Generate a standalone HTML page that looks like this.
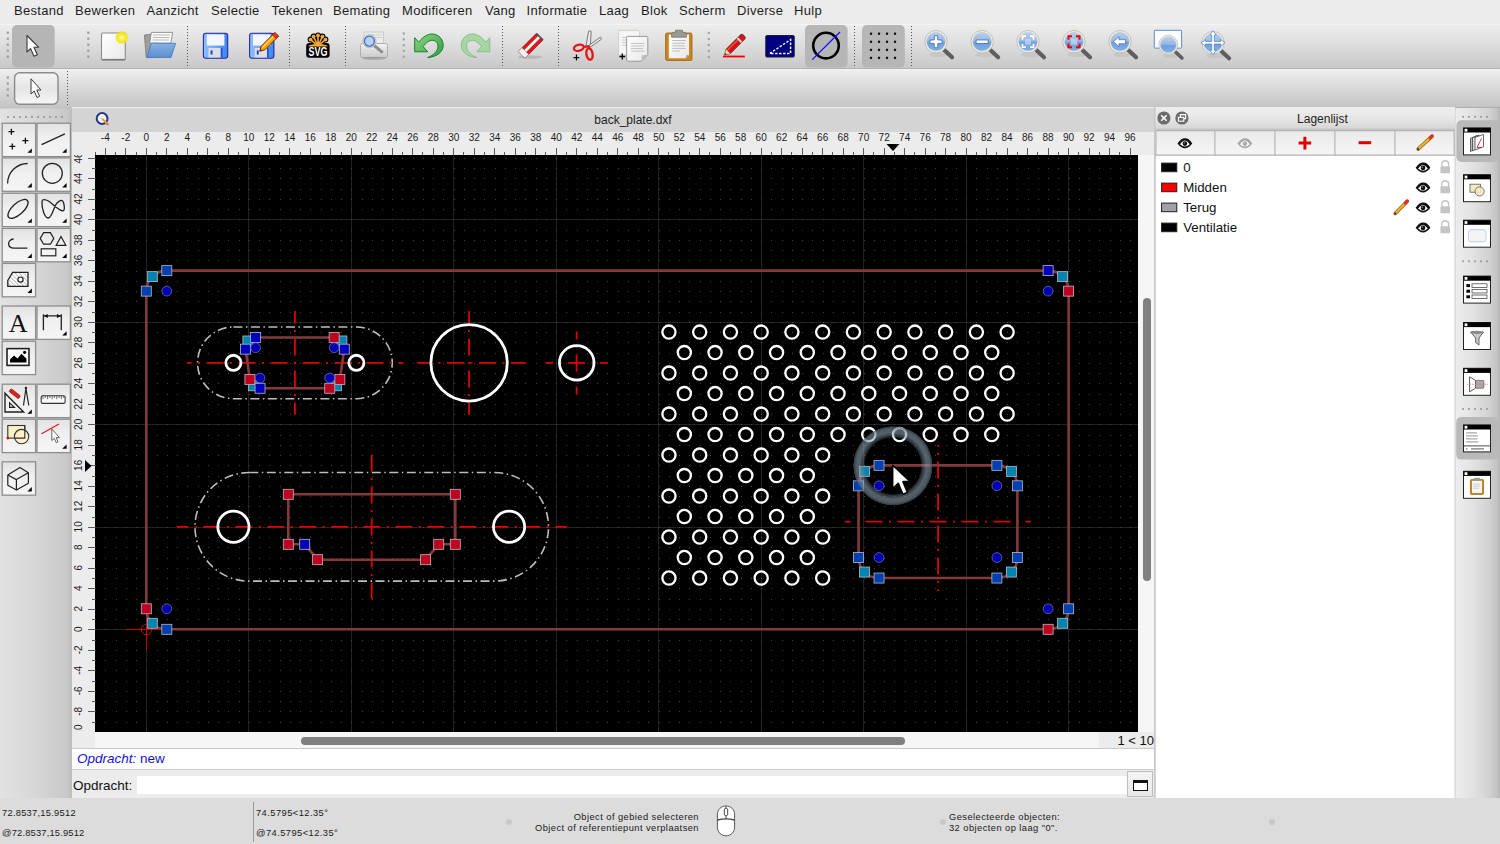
<!DOCTYPE html>
<html><head><meta charset="utf-8">
<style>
*{box-sizing:border-box}
html,body{margin:0;padding:0}
body{width:1500px;height:844px;overflow:hidden;position:relative;background:#ececec;font-family:"Liberation Sans",sans-serif;color:#1a1a1a}
.a{position:absolute}
#menubar{left:0;top:0;width:1500px;height:24px;background:#ececec}
#menubar span{position:absolute;top:3px;font-size:13px;line-height:15px;color:#1e1e1e;letter-spacing:0.3px}
#tb1{left:0;top:24px;width:1500px;height:45px;background:linear-gradient(#f7f7f7 0,#ececec 1.5px,#e2e2e2 35%,#d2d2d2 75%,#c8c8c8);border-bottom:1.5px solid #b0b0b0}
#tb2{left:0;top:69px;width:1500px;height:39px;background:linear-gradient(#f7f7f7 0,#ededed 1.5px,#e0e0e0 35%,#cfcfcf 75%,#c5c5c5);border-bottom:1.5px solid #adadad}
.sep{position:absolute;width:1px;border-left:1px dotted #6a6a6a}
.hdl{position:absolute;width:3px;background:radial-gradient(circle,#9a9a9a 0.9px,transparent 1.2px) 0 0/3px 6px repeat-y}
.selbg{position:absolute;background:#b7b7b7;border-radius:6px}
#leftdock{left:0;top:107px;width:72px;height:691px;background:linear-gradient(90deg,#e2e2e2,#d9d9d9 40%,#c9c9c9 92%,#bdbdbd)}
.pb{position:absolute;width:34px;height:34px;border:1.5px solid #8c8c8c;background:linear-gradient(#e4e4e4,#f2f2f2 55%,#f6f6f6)}
#mdi{left:72px;top:107px;width:1083px;height:691px;background:#ececec}
#titlebar{left:72px;top:108px;width:1082px;height:24px;background:#d4d4d4}
#hruler{left:72px;top:132px;width:1082px;height:23px;background:#ececec}
#vruler{left:72px;top:155px;width:23px;height:592px;background:#ececec}
.cv{position:absolute;left:95px;top:155px}
#vscroll{left:1138px;top:155px;width:16px;height:577px;background:#f6f6f6}
#hscroll{left:95px;top:732px;width:1059px;height:16px;background:#f6f6f6}
#cmdout{left:72px;top:748px;width:1082px;height:22px;background:#fff;border-top:1.5px solid #c8c8c8;border-bottom:1.5px solid #cfcfcf}
#cmdin{left:72px;top:770px;width:1082px;height:28px;background:#ececec}
#status{left:0;top:798px;width:1500px;height:46px;background:#dcdcdc}
#status .t{position:absolute;font-size:9.3px;line-height:12px;letter-spacing:0.45px;color:#1a1a1a;white-space:nowrap}
#layerdock{left:1154px;top:107px;width:301px;height:691px;background:#ececec;border-left:1.5px solid #cdcdcd}
#rightdock{left:1455px;top:108px;width:45px;height:690px;background:linear-gradient(90deg,#d2d2d2 0,#ececec 1.5px,#e4e4e4 35%,#d2d2d2 75%,#c2c2c2 94%,#b4b4b4)}
.lb{position:absolute;top:23px;width:60px;height:25px;background:linear-gradient(#eaeaea,#f4f4f4);border:1.5px solid #b5b5b5}
.lrow{position:absolute;left:6px;height:20px;width:290px;font-size:13.3px;line-height:20px;color:#111}
.sw{position:absolute;left:1px;top:6px;width:16px;height:9px;border:1px solid #222}
.dk{position:absolute;width:28px;height:28px;background:#fff;border:1px solid #333}
.dk:before{content:"";position:absolute;left:0;top:0;right:0;height:5px;background:#000}
.dk:after{content:"";position:absolute;left:1px;top:1px;width:3px;height:3px;background:#fff}
</style></head>
<body>
<div id="menubar" class="a">
<span style="left:14px">Bestand</span><span style="left:75px">Bewerken</span><span style="left:146.5px">Aanzicht</span><span style="left:211px">Selectie</span><span style="left:271.5px">Tekenen</span><span style="left:333px">Bemating</span><span style="left:402px">Modificeren</span><span style="left:485px">Vang</span><span style="left:526.5px">Informatie</span><span style="left:599px">Laag</span><span style="left:641px">Blok</span><span style="left:679px">Scherm</span><span style="left:737px">Diverse</span><span style="left:794px">Hulp</span>
</div>
<div id="tb1" class="a"></div>
<div id="tb2" class="a"></div>
<svg class="a" style="left:0;top:24px" width="1500" height="83" viewBox="0 24 1500 83"><defs>
<linearGradient id="gBlue" x1="0" y1="0" x2="0" y2="1"><stop offset="0" stop-color="#b9d0ee"/><stop offset="0.48" stop-color="#93b6e6"/><stop offset="0.52" stop-color="#6f9fdc"/><stop offset="1" stop-color="#7fb1ec"/></linearGradient>
<linearGradient id="gFold" x1="0" y1="0" x2="0" y2="1"><stop offset="0" stop-color="#88b2e2"/><stop offset="1" stop-color="#5a8fd0"/></linearGradient>
<linearGradient id="gDisk" x1="0" y1="0" x2="1" y2="0"><stop offset="0" stop-color="#8ec0ff"/><stop offset="1" stop-color="#3b86f0"/></linearGradient>
<linearGradient id="gUndo" x1="0" y1="0" x2="1" y2="1"><stop offset="0" stop-color="#8fd47e"/><stop offset="1" stop-color="#2f9e46"/></linearGradient>
<linearGradient id="gPaper" x1="0" y1="0" x2="1" y2="1"><stop offset="0" stop-color="#ffffff"/><stop offset="1" stop-color="#e8e8e8"/></linearGradient>
<linearGradient id="gPrint" x1="0" y1="0" x2="0" y2="1"><stop offset="0" stop-color="#f4f4f4"/><stop offset="1" stop-color="#c9c9c9"/></linearGradient>
<radialGradient id="gGlow"><stop offset="0" stop-color="#ffffff"/><stop offset="0.25" stop-color="#fff45a"/><stop offset="0.7" stop-color="#f2e31a"/><stop offset="1" stop-color="#f2e31a" stop-opacity="0"/></radialGradient>
<g id="lens"><ellipse cx="3" cy="13" rx="10" ry="2.5" fill="#000" opacity="0.06"/><path d="M8.5 8.5L16 15.5" stroke="#5e5e5e" stroke-width="4.2" stroke-linecap="round"/><circle r="11.2" fill="#f2f2ea" stroke="#b9b9b0" stroke-width="0.9"/><circle r="9.4" fill="url(#gBlue)" stroke="#c8c8c0" stroke-width="0.6"/></g>
</defs><rect x="6.699999999999999" y="31.6" width="2.2" height="2.2" fill="#9c9c9c"/><rect x="6.699999999999999" y="37.6" width="2.2" height="2.2" fill="#9c9c9c"/><rect x="6.699999999999999" y="43.6" width="2.2" height="2.2" fill="#9c9c9c"/><rect x="6.699999999999999" y="49.6" width="2.2" height="2.2" fill="#9c9c9c"/><rect x="6.699999999999999" y="55.6" width="2.2" height="2.2" fill="#9c9c9c"/><rect x="87.2" y="31.6" width="2.2" height="2.2" fill="#9c9c9c"/><rect x="87.2" y="37.6" width="2.2" height="2.2" fill="#9c9c9c"/><rect x="87.2" y="43.6" width="2.2" height="2.2" fill="#9c9c9c"/><rect x="87.2" y="49.6" width="2.2" height="2.2" fill="#9c9c9c"/><rect x="87.2" y="55.6" width="2.2" height="2.2" fill="#9c9c9c"/><rect x="402.7" y="32.4" width="2.2" height="2.2" fill="#a4a4a4"/><rect x="402.7" y="38.199999999999996" width="2.2" height="2.2" fill="#a4a4a4"/><rect x="402.7" y="44.0" width="2.2" height="2.2" fill="#a4a4a4"/><rect x="402.7" y="49.8" width="2.2" height="2.2" fill="#a4a4a4"/><rect x="402.7" y="55.6" width="2.2" height="2.2" fill="#a4a4a4"/><rect x="707.6999999999999" y="31.9" width="2.2" height="2.2" fill="#a4a4a4"/><rect x="707.6999999999999" y="37.9" width="2.2" height="2.2" fill="#a4a4a4"/><rect x="707.6999999999999" y="43.9" width="2.2" height="2.2" fill="#a4a4a4"/><rect x="707.6999999999999" y="49.9" width="2.2" height="2.2" fill="#a4a4a4"/><rect x="707.6999999999999" y="55.9" width="2.2" height="2.2" fill="#a4a4a4"/><line x1="187.5" y1="26" x2="187.5" y2="66" stroke="#555" stroke-width="1" stroke-dasharray="1 2"/><line x1="289.5" y1="26" x2="289.5" y2="66" stroke="#555" stroke-width="1" stroke-dasharray="1 2"/><line x1="345.5" y1="26" x2="345.5" y2="66" stroke="#555" stroke-width="1" stroke-dasharray="1 2"/><line x1="502.5" y1="26" x2="502.5" y2="66" stroke="#555" stroke-width="1" stroke-dasharray="1 2"/><line x1="558.5" y1="26" x2="558.5" y2="66" stroke="#555" stroke-width="1" stroke-dasharray="1 2"/><line x1="854.5" y1="26" x2="854.5" y2="66" stroke="#555" stroke-width="1" stroke-dasharray="1 2"/><line x1="911.5" y1="26" x2="911.5" y2="66" stroke="#555" stroke-width="1" stroke-dasharray="1 2"/><rect x="12" y="25" width="42.7" height="42.5" rx="5" fill="#b5b5b5"/><path d="M27 35.5V52L30.6 48.6L34 56.2L37.3 54.8L34 47.3H38.7Z" fill="#fff" stroke="#3a3a3a" stroke-width="1.1" stroke-linejoin="round"/><rect x="101.5" y="33" width="23.8" height="27" rx="1.2" fill="url(#gPaper)" stroke="#8a8a8a" stroke-width="1.1"/><path d="M102 59.6H125" stroke="#7a7a7a" stroke-width="1.4"/><circle cx="121.8" cy="37.5" r="7" fill="url(#gGlow)"/><path d="M144.4 35L151.5 34.3L151 57.2H146.2Z" fill="#9d9d9d" stroke="#7a7a7a" stroke-width="0.8"/><path d="M151.3 32.4H172.6L170.8 43.2H149.8Z" fill="#fbfbfb" stroke="#8a8a8a" stroke-width="0.9"/><path d="M153 35H170M153 37.5H169.5M152.5 40H169" stroke="#b8b8b8" stroke-width="1.2"/><path d="M151.4 43.1L175.6 43.4L171 57.4L146.6 57.6Z" fill="url(#gFold)" stroke="#4a7cc0" stroke-width="0.9" stroke-linejoin="round"/><rect x="203.4" y="33.2" width="24.3" height="25" rx="2.4" fill="url(#gDisk)" stroke="#2828a0" stroke-width="1.1"/><rect x="206.8" y="34.4" width="17.6" height="11.2" fill="#f4f6ff"/><rect x="208.4" y="47.9" width="12.4" height="9.6" fill="#dedee8"/><rect x="210.6" y="50.4" width="1.9" height="4.2" fill="#1a3ad0"/><rect x="220.8" y="47.9" width="1.6" height="9.6" fill="#1a4ce0"/><rect x="249.6" y="33.2" width="24.3" height="25" rx="2.4" fill="url(#gDisk)" stroke="#2828a0" stroke-width="1.1"/><rect x="253.0" y="34.4" width="17.6" height="11.2" fill="#f4f6ff"/><rect x="254.6" y="47.9" width="12.4" height="9.6" fill="#dedee8"/><rect x="256.8" y="50.4" width="1.9" height="4.2" fill="#1a3ad0"/><rect x="267.0" y="47.9" width="1.6" height="9.6" fill="#1a4ce0"/><g transform="translate(259.8 51.2) rotate(-45)"><path d="M0 0L4.5 -2.6H23.5V2.6H4.5Z" fill="#f7a800" stroke="#8a1a00" stroke-width="0.9" stroke-linejoin="round"/><path d="M4.5 -0.8H23.5" stroke="#ffd870" stroke-width="1.2"/><rect x="20.5" y="-2.6" width="3.5" height="5.2" fill="#e23a2a" stroke="#8a1a00" stroke-width="0.8"/><path d="M0 0L2 -1.1V1.1Z" fill="#333"/></g><rect x="306.2" y="43" width="23.4" height="14.8" rx="3" fill="#000"/><path d="M318 46L310.6 39.6M318 46L313.6 36.6M318 46L318 35.4M318 46L322.4 36.6M318 46L325.4 39.6" stroke="#000" stroke-width="3.6" stroke-linecap="round"/><circle cx="310.6" cy="39.6" r="3" fill="#000"/><circle cx="313.6" cy="36.6" r="3" fill="#000"/><circle cx="318" cy="35.4" r="3" fill="#000"/><circle cx="322.4" cy="36.6" r="3" fill="#000"/><circle cx="325.4" cy="39.6" r="3" fill="#000"/><path d="M318 46L310.6 39.6M318 46L313.6 36.6M318 46L318 35.4M318 46L322.4 36.6M318 46L325.4 39.6" stroke="#f5a83a" stroke-width="1.6" stroke-linecap="round"/><circle cx="310.6" cy="39.6" r="1.9" fill="#f5a83a"/><circle cx="313.6" cy="36.6" r="1.9" fill="#f5a83a"/><circle cx="318" cy="35.4" r="1.9" fill="#f5a83a"/><circle cx="322.4" cy="36.6" r="1.9" fill="#f5a83a"/><circle cx="325.4" cy="39.6" r="1.9" fill="#f5a83a"/><path d="M308.6 45.4Q318 42.5 327.4 45.4V46.4H308.6Z" fill="#f5a83a"/><text x="0" y="56.2" text-anchor="middle" font-family="Liberation Sans" font-weight="bold" font-size="12.4" fill="#fff" transform="translate(318 0) scale(0.72 1)">SVG</text><rect x="364" y="32" width="19.5" height="14" fill="#ececec" stroke="#c4c4c4" stroke-width="0.8"/><path d="M371 35H382M371 37.5H382" stroke="#cfcfcf" stroke-width="1"/><rect x="360.5" y="43.5" width="27" height="14.2" rx="2" fill="url(#gPrint)" stroke="#a8a8a8" stroke-width="0.9"/><path d="M362 50.5H386" stroke="#d8d8d8" stroke-width="1"/><ellipse cx="374" cy="58.5" rx="12" ry="1.6" fill="#000" opacity="0.15"/><path d="M373.5 45L381.8 51.8" stroke="#8d8d8d" stroke-width="3" stroke-linecap="round"/><circle cx="369.4" cy="41.2" r="6.6" fill="#dfe3e8" stroke="#b0b0b0" stroke-width="0.8"/><circle cx="369.4" cy="41.2" r="5" fill="#bcd0ec" stroke="#3a6ec4" stroke-width="1.3"/><path d="M414.7 37.7L418.6 42.1C423.5 36.5 427.5 34 432 34C438.5 34 443.2 39 443.2 45.5C443.2 52 436.5 57 427.6 57.6C434 55 438 51 438 46C438 42.5 435.5 40.3 432.3 40.3C429.3 40.3 426.3 42.5 423 46.5L427.6 51.8H414.7Z" fill="url(#gUndo)" stroke="#18802e" stroke-width="1"/><g transform="translate(904.5 0) scale(-1 1)"><path d="M414.7 37.7L418.6 42.1C423.5 36.5 427.5 34 432 34C438.5 34 443.2 39 443.2 45.5C443.2 52 436.5 57 427.6 57.6C434 55 438 51 438 46C438 42.5 435.5 40.3 432.3 40.3C429.3 40.3 426.3 42.5 423 46.5L427.6 51.8H414.7Z" fill="#a6d6a0" stroke="#7fbf8c" stroke-width="1" opacity="0.95"/></g><ellipse cx="530" cy="57" rx="12" ry="1.8" fill="#000" opacity="0.12"/><g transform="translate(530.8 45.6) rotate(-45)"><rect x="-13" y="-4.7" width="26" height="9.4" rx="1" fill="#d81a1a" stroke="#a80000" stroke-width="0.6"/><rect x="-13" y="-1.5" width="26" height="2.8" fill="#fafafa"/><rect x="-13" y="-4.7" width="5.2" height="9.4" fill="#f4f4f4" stroke="#999" stroke-width="0.5"/><rect x="11.6" y="-4.7" width="1.6" height="9.4" fill="#555"/></g><path d="M586 46.2L588.6 31.2Q590 30.4 591.2 31.4L590.2 46.2Z" fill="#ececec" stroke="#5a5a5a" stroke-width="0.8"/><path d="M589.2 45.2L600.4 37.2Q601.6 37.8 601.2 39.4L590.4 47Z" fill="#ececec" stroke="#5a5a5a" stroke-width="0.8"/><ellipse cx="578.8" cy="47.8" rx="5" ry="3" transform="rotate(-14 578.8 47.8)" fill="none" stroke="#e01818" stroke-width="2.3"/><ellipse cx="589.5" cy="54" rx="3.1" ry="5.8" transform="rotate(-10 589.5 54)" fill="none" stroke="#e01818" stroke-width="2.3"/><path d="M583.6 47L588.3 46.3L589.2 48.4" stroke="#e01818" stroke-width="2.2" fill="none"/><path d="M573.5 57.6H579.4M576.45 54.6V60.6" stroke="#000" stroke-width="1.2"/><path d="M618.6 31.2Q618.6 30.4 619.4 30.4H638.5L639.6 31.5V55H619.4Q618.6 55 618.6 54.2Z" fill="#f6f6f6" stroke="#c8c8c8" stroke-width="0.8"/><path d="M622 37.5H630M622 40H630M622 42.6H630M622 45.2H630" stroke="#cccccc" stroke-width="1"/><path d="M626.6 37.2Q626.6 36.4 627.4 36.4H647L647.8 37.2V54.5L641.5 61.2H627.4Q626.6 61.2 626.6 60.4Z" fill="url(#gPaper)" stroke="#8e8e8e" stroke-width="0.9"/><path d="M641.5 61.2L641.8 55.5L647.8 54.5Z" fill="#bdbdbd"/><path d="M631 43.4H644.5M631 46H644M631 48.6H643M631 51.2H644.5" stroke="#c2c2c2" stroke-width="1"/><path d="M619.4 56.5H625.2M622.3 53.6V59.5" stroke="#000" stroke-width="1.3"/><rect x="665.6" y="33" width="26.4" height="27.5" rx="1.6" fill="#c98520" stroke="#9a6010" stroke-width="0.8"/><path d="M668.8 34.4H689V55L686 58.2H668.8Z" fill="url(#gPaper)"/><path d="M686 58.2L686.3 55.3L689 55Z" fill="#9a9a9a"/><path d="M672.2 40.5H685.8M672.2 43.2H685M672.2 45.8H684.5M672.2 48.4H685.8M672.2 51H680" stroke="#bdbdbd" stroke-width="1"/><path d="M675.5 30.2H682.6V32.4H685.6L686.4 34V37.2H671.6V34L672.4 32.4H675.5Z" fill="#9a9a90" stroke="#6a6a64" stroke-width="0.7"/><path d="M723 56.5H744.8" stroke="#f00000" stroke-width="1.8"/><g transform="translate(724.6 55) rotate(-45)"><path d="M0 0L5 -3H25.5Q27.5 -3 27.5 0Q27.5 3 25.5 3H5Z" fill="#d81020" stroke="#6a3a10" stroke-width="0.9" stroke-linejoin="round"/><path d="M5 -1.4H22" stroke="#e85a2a" stroke-width="1.3"/><rect x="20" y="-3" width="2" height="6" fill="#d8d8d8"/><path d="M0 0L5 -3V3Z" fill="#f0d0a8"/><path d="M0 0L1.8 -1.1V1.1Z" fill="#222"/></g><rect x="765.8" y="35.6" width="28.4" height="21.4" rx="1" fill="#000080" stroke="#1a1a2a" stroke-width="1"/><path d="M769.8 53.5L790.6 39.6V53.5Z" fill="none" stroke="#fff" stroke-width="1.4" stroke-dasharray="2.4 1.6"/><rect x="805" y="25" width="42.6" height="42.6" rx="5" fill="#b6b6b6"/><circle cx="826" cy="45.6" r="12.8" fill="none" stroke="#000" stroke-width="2.6"/><path d="M812.2 59.6L840 32" stroke="#1010ff" stroke-width="1.3"/><rect x="862" y="25" width="42.8" height="42.6" rx="5" fill="#b6b6b6"/><rect x="869.9" y="32.6" width="2.2" height="2.2" fill="#111"/><rect x="877.9" y="32.6" width="2.2" height="2.2" fill="#111"/><rect x="885.9" y="32.6" width="2.2" height="2.2" fill="#111"/><rect x="893.9" y="32.6" width="2.2" height="2.2" fill="#111"/><rect x="869.9" y="40.699999999999996" width="2.2" height="2.2" fill="#111"/><rect x="877.9" y="40.699999999999996" width="2.2" height="2.2" fill="#111"/><rect x="885.9" y="40.699999999999996" width="2.2" height="2.2" fill="#111"/><rect x="893.9" y="40.699999999999996" width="2.2" height="2.2" fill="#111"/><rect x="869.9" y="48.8" width="2.2" height="2.2" fill="#111"/><rect x="877.9" y="48.8" width="2.2" height="2.2" fill="#111"/><rect x="885.9" y="48.8" width="2.2" height="2.2" fill="#111"/><rect x="893.9" y="48.8" width="2.2" height="2.2" fill="#111"/><rect x="869.9" y="56.8" width="2.2" height="2.2" fill="#111"/><rect x="877.9" y="56.8" width="2.2" height="2.2" fill="#111"/><rect x="885.9" y="56.8" width="2.2" height="2.2" fill="#111"/><rect x="893.9" y="56.8" width="2.2" height="2.2" fill="#111"/><g transform="translate(936 41.7)"><use href="#lens"/><path d="M-1.7 -6H1.7V-1.7H6V1.7H1.7V6H-1.7V1.7H-6V-1.7H-1.7Z" fill="#fff" stroke="#2a5ca8" stroke-width="0.7"/></g><g transform="translate(982.1 41.7)"><use href="#lens"/><rect x="-6" y="-1.7" width="12" height="3.4" fill="#fff" stroke="#2a5ca8" stroke-width="0.7"/></g><g transform="translate(1028 41.7)"><use href="#lens"/><rect x="-3" y="-3" width="6" height="6" fill="#c0d4f0" opacity="0.8"/><path d="M-5.5 -2V-5.5H-2M2 -5.5H5.5V-2M5.5 2V5.5H2M-2 5.5H-5.5V2" fill="none" stroke="#fff" stroke-width="1.8"/></g><g transform="translate(1074 41.7)"><use href="#lens"/><rect x="-3" y="-3" width="6" height="6" fill="#c0d4f0" opacity="0.8"/><path d="M-5.5 -2V-5.5H-2M2 -5.5H5.5V-2M5.5 2V5.5H2M-2 5.5H-5.5V2" fill="none" stroke="#f00000" stroke-width="2"/></g><g transform="translate(1120 41.7)"><use href="#lens"/><path d="M-6.5 0L-1 -5V-2H5.5V2H-1V5Z" fill="#fff" stroke="#2a5ca8" stroke-width="0.6"/></g><rect x="1154.3" y="30.3" width="27.3" height="17.8" rx="0.8" fill="#fff" stroke="#5a8ad0" stroke-width="1"/><g transform="translate(1168.3 44.8) scale(0.85)"><use href="#lens"/></g><g transform="translate(1213 42.7)"><use href="#lens"/><path d="M0 -12L-3.2 -7.5H-1.3V-1.3H-7.5V-3.2L-12 0L-7.5 3.2V1.3H-1.3V7.5H-3.2L0 12L3.2 7.5H1.3V1.3H7.5V3.2L12 0L7.5 -3.2V-1.3H1.3V-7.5H3.2Z" fill="#fff" stroke="#4a7cc8" stroke-width="0.7"/></g><rect x="6.699999999999999" y="76.4" width="2.2" height="2.2" fill="#9c9c9c"/><rect x="6.699999999999999" y="82.4" width="2.2" height="2.2" fill="#9c9c9c"/><rect x="6.699999999999999" y="88.4" width="2.2" height="2.2" fill="#9c9c9c"/><rect x="6.699999999999999" y="94.4" width="2.2" height="2.2" fill="#9c9c9c"/><line x1="67.5" y1="71" x2="67.5" y2="105" stroke="#555" stroke-width="1" stroke-dasharray="1 2"/><rect x="14.6" y="72.8" width="43.4" height="31.5" rx="5" fill="url(#gTb2btn)" stroke="#8a8a8a" stroke-width="1.4"/><defs><linearGradient id="gTb2btn" x1="0" y1="0" x2="0" y2="1"><stop offset="0" stop-color="#f4f4f4"/><stop offset="0.5" stop-color="#e6e6e6"/><stop offset="1" stop-color="#f6f6f6"/></linearGradient></defs><path d="M31 78.8V94L34.2 91L37 97.5L39.6 96.3L36.8 90H41Z" fill="#fff" stroke="#3a3a3a" stroke-width="1" stroke-linejoin="round"/></svg>

<div id="leftdock" class="a"></div>
<svg class="a" style="left:0;top:107px" width="72" height="400" viewBox="0 107 72 400"><defs><linearGradient id="gPB" x1="0" y1="0" x2="0" y2="1"><stop offset="0" stop-color="#e2e2e2"/><stop offset="0.45" stop-color="#f0f0f0"/><stop offset="1" stop-color="#f5f5f5"/></linearGradient></defs><rect x="0" y="107" width="72" height="1.5" fill="#c2c2c2"/><rect x="7" y="116" width="2" height="2" fill="#a2a2a2"/><rect x="13" y="116" width="2" height="2" fill="#a2a2a2"/><rect x="19" y="116" width="2" height="2" fill="#a2a2a2"/><rect x="25" y="116" width="2" height="2" fill="#a2a2a2"/><rect x="31" y="116" width="2" height="2" fill="#a2a2a2"/><rect x="37" y="116" width="2" height="2" fill="#a2a2a2"/><rect x="43" y="116" width="2" height="2" fill="#a2a2a2"/><rect x="49" y="116" width="2" height="2" fill="#a2a2a2"/><rect x="55" y="116" width="2" height="2" fill="#a2a2a2"/><rect x="61" y="116" width="2" height="2" fill="#a2a2a2"/><rect x="2.2" y="123.19999999999999" width="33.4" height="33.4" fill="url(#gPB)" stroke="#8e8e8e" stroke-width="1.3"/><rect x="37.0" y="123.19999999999999" width="33.4" height="33.4" fill="url(#gPB)" stroke="#8e8e8e" stroke-width="1.3"/><rect x="2.2" y="157.9" width="33.4" height="33.4" fill="url(#gPB)" stroke="#8e8e8e" stroke-width="1.3"/><rect x="37.0" y="157.9" width="33.4" height="33.4" fill="url(#gPB)" stroke="#8e8e8e" stroke-width="1.3"/><rect x="2.2" y="193.2" width="33.4" height="33.4" fill="url(#gPB)" stroke="#8e8e8e" stroke-width="1.3"/><rect x="37.0" y="193.2" width="33.4" height="33.4" fill="url(#gPB)" stroke="#8e8e8e" stroke-width="1.3"/><rect x="2.2" y="228.4" width="33.4" height="33.4" fill="url(#gPB)" stroke="#8e8e8e" stroke-width="1.3"/><rect x="37.0" y="228.4" width="33.4" height="33.4" fill="url(#gPB)" stroke="#8e8e8e" stroke-width="1.3"/><rect x="2.2" y="263.40000000000003" width="33.4" height="33.4" fill="url(#gPB)" stroke="#8e8e8e" stroke-width="1.3"/><rect x="2.2" y="306.0" width="33.4" height="33.4" fill="url(#gPB)" stroke="#8e8e8e" stroke-width="1.3"/><rect x="37.0" y="306.0" width="33.4" height="33.4" fill="url(#gPB)" stroke="#8e8e8e" stroke-width="1.3"/><rect x="2.2" y="341.20000000000005" width="33.4" height="33.4" fill="url(#gPB)" stroke="#8e8e8e" stroke-width="1.3"/><rect x="2.2" y="384.20000000000005" width="33.4" height="33.4" fill="url(#gPB)" stroke="#8e8e8e" stroke-width="1.3"/><rect x="37.0" y="384.20000000000005" width="33.4" height="33.4" fill="url(#gPB)" stroke="#8e8e8e" stroke-width="1.3"/><rect x="2.2" y="419.20000000000005" width="33.4" height="33.4" fill="url(#gPB)" stroke="#8e8e8e" stroke-width="1.3"/><rect x="37.0" y="419.20000000000005" width="33.4" height="33.4" fill="url(#gPB)" stroke="#8e8e8e" stroke-width="1.3"/><rect x="2.2" y="461.8" width="33.4" height="33.4" fill="url(#gPB)" stroke="#8e8e8e" stroke-width="1.3"/><path d="M8.4 131.7H14.4M11.4 128.7V134.7M22.4 140.7H28.4M25.4 137.7V143.7M9.3 146.4H15.3M12.3 143.4V149.4" stroke="#111" stroke-width="1.3"/><path d="M31.8 148.4V152.79999999999998H27.400000000000002Z" fill="#000"/><path d="M41.6 144.7L64.9 133.8" stroke="#222" fill="none" stroke-width="1.3"/><path d="M66.6 148.4V152.79999999999998H62.2Z" fill="#000"/><path d="M7.6 183.4A20 20 0 0 1 27.6 163.5" stroke="#222" fill="none" stroke-width="1.3"/><path d="M31.8 183.10000000000002V187.5H27.400000000000002Z" fill="#000"/><circle cx="52.3" cy="173.3" r="10" stroke="#222" fill="none" stroke-width="1.3"/><path d="M66.6 183.10000000000002V187.5H62.2Z" fill="#000"/><ellipse cx="18" cy="208.9" rx="12.6" ry="5.6" transform="rotate(-42 18 208.9)" stroke="#222" fill="none" stroke-width="1.3"/><path d="M31.8 218.4V222.79999999999998H27.400000000000002Z" fill="#000"/><path d="M42 201.5C41.5 209 45 218.5 48.5 218C52 217.5 54 206 57 203C60 200 62.5 199 63.5 202.5C64.5 206 65 210.8 62.8 210.8C59 210.8 53 204 48.5 201C45 199 42 199 42 201.5Z" stroke="#222" fill="none" stroke-width="1.3"/><path d="M66.6 218.4V222.79999999999998H62.2Z" fill="#000"/><path d="M13.6 239C10 239.3 8.6 242 8.6 243.6C8.6 246.5 10.8 248.2 14 248.2H27.4" stroke="#222" fill="none" stroke-width="1.3"/><path d="M31.8 253.60000000000002V258.0H27.400000000000002Z" fill="#000"/><path d="M43.6 232.6H50.4L53.8 238.4L50.4 244.2H43.6L40.2 238.4Z" stroke="#222" fill="none" stroke-width="1.2"/><path d="M56.2 245.3L61 236.4L65.8 245.3Z" stroke="#222" fill="none" stroke-width="1.2"/><rect x="41.2" y="248.8" width="14.6" height="7" stroke="#222" fill="none" stroke-width="1.2"/><path d="M66.6 253.60000000000002V258.0H62.2Z" fill="#000"/><defs><pattern id="hp" width="3" height="3" patternUnits="userSpaceOnUse" patternTransform="rotate(-45)"><rect width="3" height="3" fill="#fff"/><path d="M0 0V3" stroke="#888" stroke-width="1"/></pattern></defs><path d="M7.8 286.4V280.4L12.6 272.4H28V286.4Z" fill="url(#hp)" stroke="#222" stroke-width="1.3"/><circle cx="20.5" cy="279.6" r="2.6" fill="#fff" stroke="#222" stroke-width="1.2"/><path d="M31.8 288.6V293.0H27.400000000000002Z" fill="#000"/><text x="18.2" y="331.8" text-anchor="middle" font-family="Liberation Serif" font-size="26" fill="#111">A</text><path d="M43.4 314.2V330.2M61.3 314.2V330.2M44 315.9H60.7" stroke="#222" fill="none" stroke-width="1.3"/><path d="M43.8 315.9L47.8 313.9V317.9ZM60.9 315.9L56.9 313.9V317.9Z" fill="#111"/><path d="M66.6 331.2V335.59999999999997H62.2Z" fill="#000"/><rect x="7" y="348.6" width="22" height="16.8" fill="#fff" stroke="#222" stroke-width="1.6"/><path d="M10 362.5V359.5L14 355.5L17.5 358.5L21.5 353.8L26.5 358.8V362.5Z" fill="#000"/><circle cx="24.6" cy="352.3" r="1.6" fill="#000"/><path d="M5 393.2V412H23.6Z" stroke="#222" fill="none" stroke-width="1.4"/><path d="M9.6 402.8V407.4H14.4Z" stroke="#222" fill="none" stroke-width="1.2"/><g transform="translate(10 390) rotate(38)"><rect x="0" y="-1.8" width="12" height="3.6" rx="1" fill="#e02020" stroke="#8a1010" stroke-width="0.6"/></g><path d="M23.5 405.5L25.9 388.5L28.8 405.5" stroke="#222" fill="none" stroke-width="1.2"/><circle cx="25.9" cy="388" r="1.2" fill="#222"/><path d="M31.8 409.40000000000003V413.8H27.400000000000002Z" fill="#000"/><rect x="41.2" y="395.8" width="23.9" height="7.6" rx="1.5" fill="#fafafa" stroke="#333" stroke-width="1.1"/><path d="M43.0 395.8V399.2M45.3 395.8V398M47.6 395.8V399.2M49.9 395.8V398M52.2 395.8V399.2M54.5 395.8V398M56.8 395.8V399.2M59.1 395.8V398M61.4 395.8V399.2M63.7 395.8V398" stroke="#333" stroke-width="0.7"/><rect x="7.8" y="425.5" width="17" height="12.6" fill="#fdf1c4" stroke="#333" stroke-width="1.1"/><circle cx="21.6" cy="436.6" r="7.2" fill="#fdf1c4" fill-opacity="0.9" stroke="#333" stroke-width="1.1"/><path d="M14.2 438.1H24.8V425.5" fill="none" stroke="#333" stroke-width="1.1"/><circle cx="7.8" cy="438.1" r="1.3" fill="#e00000"/><path d="M41.5 433.7L59 424" stroke="#f01818" stroke-width="1.3"/><path d="M51.8 429V440.5L54.3 438.3L56.2 442.6L58 441.8L56.2 437.6H59.4Z" fill="#fff" stroke="#555" stroke-width="0.9" stroke-linejoin="round"/><path d="M66.6 444.40000000000003V448.8H62.2Z" fill="#000"/><path d="M7.8 475L19.9 467.5L28.4 472.7L16.4 479.6ZM7.8 475V485.3L16.4 490V479.6M16.4 490L28.4 483.3V472.7" stroke="#222" fill="none" stroke-width="1.2" stroke-linejoin="round"/><path d="M31.8 487.0V491.4H27.400000000000002Z" fill="#000"/></svg>

<div id="mdi" class="a"></div>
<div id="titlebar" class="a"></div>
<div class="a" style="left:72px;top:112px;width:1082px;text-align:center;font-size:12px;line-height:16px;color:#222;padding-left:40px">back_plate.dxf</div>
<svg class="a" style="left:92px;top:109px" width="20" height="20" viewBox="92 109 20 20"><circle cx="102.1" cy="118.5" r="5.4" fill="#fafafa" stroke="#23388a" stroke-width="2"/><path d="M99.5 118.5H104.5M102 116V121" stroke="#c0c0c0" stroke-width="0.6"/><path d="M103 119.5L107.4 124" stroke="#f0a020" stroke-width="2" stroke-linecap="round"/><circle cx="107.5" cy="124.2" r="1.1" fill="#e06060"/></svg>
<div id="hruler" class="a"></div>
<div id="vruler" class="a"></div>
<svg class="a" style="left:72px;top:132px" width="1082" height="23" viewBox="72 132 1082 23"><path stroke="#5c5c5c" stroke-width="1" d="M95.5 152V155M105.5 148V155M115.5 152V155M125.5 148V155M136.5 152V155M146.5 148V155M156.5 152V155M166.5 148V155M177.5 152V155M187.5 148V155M197.5 152V155M207.5 148V155M218.5 152V155M228.5 148V155M238.5 152V155M248.5 148V155M259.5 152V155M269.5 148V155M279.5 152V155M289.5 148V155M300.5 152V155M310.5 148V155M320.5 152V155M330.5 148V155M341.5 152V155M351.5 148V155M361.5 152V155M371.5 148V155M382.5 152V155M392.5 148V155M402.5 152V155M412.5 148V155M422.5 152V155M433.5 148V155M443.5 152V155M453.5 148V155M463.5 152V155M474.5 148V155M484.5 152V155M494.5 148V155M504.5 152V155M515.5 148V155M525.5 152V155M535.5 148V155M545.5 152V155M556.5 148V155M566.5 152V155M576.5 148V155M586.5 152V155M597.5 148V155M607.5 152V155M617.5 148V155M627.5 152V155M638.5 148V155M648.5 152V155M658.5 148V155M668.5 152V155M679.5 148V155M689.5 152V155M699.5 148V155M709.5 152V155M720.5 148V155M730.5 152V155M740.5 148V155M750.5 152V155M761.5 148V155M771.5 152V155M781.5 148V155M791.5 152V155M802.5 148V155M812.5 152V155M822.5 148V155M832.5 152V155M843.5 148V155M853.5 152V155M863.5 148V155M873.5 152V155M884.5 148V155M894.5 152V155M904.5 148V155M914.5 152V155M925.5 148V155M935.5 152V155M945.5 148V155M955.5 152V155M966.5 148V155M976.5 152V155M986.5 148V155M996.5 152V155M1007.5 148V155M1017.5 152V155M1027.5 148V155M1037.5 152V155M1048.5 148V155M1058.5 152V155M1068.5 148V155M1078.5 152V155M1089.5 148V155M1099.5 152V155M1109.5 148V155M1119.5 152V155M1130.5 148V155"/><g font-family="Liberation Sans" font-size="10" text-anchor="middle" fill="#1a1a1a"><text x="105.31" y="141">-4</text><text x="125.8" y="141">-2</text><text x="146.3" y="141">0</text><text x="166.8" y="141">2</text><text x="187.29" y="141">4</text><text x="207.79" y="141">6</text><text x="228.28" y="141">8</text><text x="248.78" y="141">10</text><text x="269.28" y="141">12</text><text x="289.77" y="141">14</text><text x="310.27" y="141">16</text><text x="330.76" y="141">18</text><text x="351.26" y="141">20</text><text x="371.76" y="141">22</text><text x="392.25" y="141">24</text><text x="412.75" y="141">26</text><text x="433.24" y="141">28</text><text x="453.74" y="141">30</text><text x="474.24" y="141">32</text><text x="494.73" y="141">34</text><text x="515.23" y="141">36</text><text x="535.72" y="141">38</text><text x="556.22" y="141">40</text><text x="576.72" y="141">42</text><text x="597.21" y="141">44</text><text x="617.71" y="141">46</text><text x="638.2" y="141">48</text><text x="658.7" y="141">50</text><text x="679.2" y="141">52</text><text x="699.69" y="141">54</text><text x="720.19" y="141">56</text><text x="740.68" y="141">58</text><text x="761.18" y="141">60</text><text x="781.68" y="141">62</text><text x="802.17" y="141">64</text><text x="822.67" y="141">66</text><text x="843.16" y="141">68</text><text x="863.66" y="141">70</text><text x="884.16" y="141">72</text><text x="904.65" y="141">74</text><text x="925.15" y="141">76</text><text x="945.64" y="141">78</text><text x="966.14" y="141">80</text><text x="986.64" y="141">82</text><text x="1007.13" y="141">84</text><text x="1027.63" y="141">86</text><text x="1048.12" y="141">88</text><text x="1068.62" y="141">90</text><text x="1089.12" y="141">92</text><text x="1109.61" y="141">94</text><text x="1130.11" y="141">96</text></g><path d="M886.5 144H899.5L893 151Z" fill="#000"/></svg><svg class="a" style="left:72px;top:155px" width="23" height="576" viewBox="72 155 23 576"><path stroke="#5c5c5c" stroke-width="1" d="M88 732.5H95M92 722.5H95M88 711.5H95M92 701.5H95M88 691.5H95M92 681.5H95M88 670.5H95M92 660.5H95M88 650.5H95M92 640.5H95M88 629.5H95M92 619.5H95M88 609.5H95M92 599.5H95M88 588.5H95M92 578.5H95M88 568.5H95M92 558.5H95M88 547.5H95M92 537.5H95M88 527.5H95M92 517.5H95M88 506.5H95M92 496.5H95M88 486.5H95M92 476.5H95M88 465.5H95M92 455.5H95M88 445.5H95M92 435.5H95M88 424.5H95M92 414.5H95M88 404.5H95M92 394.5H95M88 383.5H95M92 373.5H95M88 363.5H95M92 353.5H95M88 342.5H95M92 332.5H95M88 322.5H95M92 312.5H95M88 301.5H95M92 291.5H95M88 281.5H95M92 271.5H95M88 260.5H95M92 250.5H95M88 240.5H95M92 230.5H95M88 219.5H95M92 209.5H95M88 199.5H95M92 189.5H95M88 178.5H95M92 168.5H95M88 158.5H95"/><g font-family="Liberation Sans" font-size="10" text-anchor="middle" fill="#1a1a1a"><text transform="translate(81.5 731.78) rotate(-90)" x="0" y="0">-10</text><text transform="translate(81.5 711.28) rotate(-90)" x="0" y="0">-8</text><text transform="translate(81.5 690.79) rotate(-90)" x="0" y="0">-6</text><text transform="translate(81.5 670.29) rotate(-90)" x="0" y="0">-4</text><text transform="translate(81.5 649.8) rotate(-90)" x="0" y="0">-2</text><text transform="translate(81.5 629.3) rotate(-90)" x="0" y="0">0</text><text transform="translate(81.5 608.8) rotate(-90)" x="0" y="0">2</text><text transform="translate(81.5 588.31) rotate(-90)" x="0" y="0">4</text><text transform="translate(81.5 567.81) rotate(-90)" x="0" y="0">6</text><text transform="translate(81.5 547.32) rotate(-90)" x="0" y="0">8</text><text transform="translate(81.5 526.82) rotate(-90)" x="0" y="0">10</text><text transform="translate(81.5 506.32) rotate(-90)" x="0" y="0">12</text><text transform="translate(81.5 485.83) rotate(-90)" x="0" y="0">14</text><text transform="translate(81.5 465.33) rotate(-90)" x="0" y="0">16</text><text transform="translate(81.5 444.84) rotate(-90)" x="0" y="0">18</text><text transform="translate(81.5 424.34) rotate(-90)" x="0" y="0">20</text><text transform="translate(81.5 403.84) rotate(-90)" x="0" y="0">22</text><text transform="translate(81.5 383.35) rotate(-90)" x="0" y="0">24</text><text transform="translate(81.5 362.85) rotate(-90)" x="0" y="0">26</text><text transform="translate(81.5 342.36) rotate(-90)" x="0" y="0">28</text><text transform="translate(81.5 321.86) rotate(-90)" x="0" y="0">30</text><text transform="translate(81.5 301.36) rotate(-90)" x="0" y="0">32</text><text transform="translate(81.5 280.87) rotate(-90)" x="0" y="0">34</text><text transform="translate(81.5 260.37) rotate(-90)" x="0" y="0">36</text><text transform="translate(81.5 239.88) rotate(-90)" x="0" y="0">38</text><text transform="translate(81.5 219.38) rotate(-90)" x="0" y="0">40</text><text transform="translate(81.5 198.88) rotate(-90)" x="0" y="0">42</text><text transform="translate(81.5 178.39) rotate(-90)" x="0" y="0">44</text><text transform="translate(81.5 157.89) rotate(-90)" x="0" y="0">46</text></g><path d="M85 460V472L91.5 466Z" fill="#000"/></svg>

<svg class="cv" width="1043" height="577" viewBox="95 155 1043 577">
<rect x="95" y="155" width="1043" height="577" fill="#000"/>
<path stroke="#222" stroke-width="1" fill="none" d="M146.5 155V732M248.5 155V732M351.5 155V732M453.5 155V732M556.5 155V732M658.5 155V732M761.5 155V732M863.5 155V732M966.5 155V732M1068.5 155V732M95 629.5H1138M95 527.5H1138M95 424.5H1138M95 322.5H1138M95 219.5H1138"/>
<path stroke="#454545" stroke-width="1" fill="none" d="M95 722.5h1m9 0h1m10 0h1m9 0h1m9 0h1m9 0h1m10 0h1m9 0h1m9 0h1m9 0h1m10 0h1m9 0h1m9 0h1m9 0h1m10 0h1m9 0h1m9 0h1m9 0h1m10 0h1m9 0h1m9 0h1m9 0h1m10 0h1m9 0h1m9 0h1m9 0h1m10 0h1m9 0h1m9 0h1m9 0h1m9 0h1m10 0h1m9 0h1m9 0h1m9 0h1m10 0h1m9 0h1m9 0h1m9 0h1m10 0h1m9 0h1m9 0h1m9 0h1m10 0h1m9 0h1m9 0h1m9 0h1m10 0h1m9 0h1m9 0h1m9 0h1m10 0h1m9 0h1m9 0h1m9 0h1m10 0h1m9 0h1m9 0h1m9 0h1m10 0h1m9 0h1m9 0h1m9 0h1m10 0h1m9 0h1m9 0h1m9 0h1m10 0h1m9 0h1m9 0h1m9 0h1m10 0h1m9 0h1m9 0h1m9 0h1m10 0h1m9 0h1m9 0h1m9 0h1m10 0h1m9 0h1m9 0h1m9 0h1m10 0h1m9 0h1m9 0h1m9 0h1m10 0h1m9 0h1m9 0h1m9 0h1m10 0h1m9 0h1m9 0h1m9 0h1m10 0h1m9 0h1m9 0h1m9 0h1m10 0h1m9 0h1m9 0h1M95 711.5h1m9 0h1m10 0h1m9 0h1m9 0h1m9 0h1m10 0h1m9 0h1m9 0h1m9 0h1m10 0h1m9 0h1m9 0h1m9 0h1m10 0h1m9 0h1m9 0h1m9 0h1m10 0h1m9 0h1m9 0h1m9 0h1m10 0h1m9 0h1m9 0h1m9 0h1m10 0h1m9 0h1m9 0h1m9 0h1m9 0h1m10 0h1m9 0h1m9 0h1m9 0h1m10 0h1m9 0h1m9 0h1m9 0h1m10 0h1m9 0h1m9 0h1m9 0h1m10 0h1m9 0h1m9 0h1m9 0h1m10 0h1m9 0h1m9 0h1m9 0h1m10 0h1m9 0h1m9 0h1m9 0h1m10 0h1m9 0h1m9 0h1m9 0h1m10 0h1m9 0h1m9 0h1m9 0h1m10 0h1m9 0h1m9 0h1m9 0h1m10 0h1m9 0h1m9 0h1m9 0h1m10 0h1m9 0h1m9 0h1m9 0h1m10 0h1m9 0h1m9 0h1m9 0h1m10 0h1m9 0h1m9 0h1m9 0h1m10 0h1m9 0h1m9 0h1m9 0h1m10 0h1m9 0h1m9 0h1m9 0h1m10 0h1m9 0h1m9 0h1m9 0h1m10 0h1m9 0h1m9 0h1m9 0h1m10 0h1m9 0h1m9 0h1M95 701.5h1m9 0h1m10 0h1m9 0h1m9 0h1m9 0h1m10 0h1m9 0h1m9 0h1m9 0h1m10 0h1m9 0h1m9 0h1m9 0h1m10 0h1m9 0h1m9 0h1m9 0h1m10 0h1m9 0h1m9 0h1m9 0h1m10 0h1m9 0h1m9 0h1m9 0h1m10 0h1m9 0h1m9 0h1m9 0h1m9 0h1m10 0h1m9 0h1m9 0h1m9 0h1m10 0h1m9 0h1m9 0h1m9 0h1m10 0h1m9 0h1m9 0h1m9 0h1m10 0h1m9 0h1m9 0h1m9 0h1m10 0h1m9 0h1m9 0h1m9 0h1m10 0h1m9 0h1m9 0h1m9 0h1m10 0h1m9 0h1m9 0h1m9 0h1m10 0h1m9 0h1m9 0h1m9 0h1m10 0h1m9 0h1m9 0h1m9 0h1m10 0h1m9 0h1m9 0h1m9 0h1m10 0h1m9 0h1m9 0h1m9 0h1m10 0h1m9 0h1m9 0h1m9 0h1m10 0h1m9 0h1m9 0h1m9 0h1m10 0h1m9 0h1m9 0h1m9 0h1m10 0h1m9 0h1m9 0h1m9 0h1m10 0h1m9 0h1m9 0h1m9 0h1m10 0h1m9 0h1m9 0h1m9 0h1m10 0h1m9 0h1m9 0h1M95 691.5h1m9 0h1m10 0h1m9 0h1m9 0h1m9 0h1m10 0h1m9 0h1m9 0h1m9 0h1m10 0h1m9 0h1m9 0h1m9 0h1m10 0h1m9 0h1m9 0h1m9 0h1m10 0h1m9 0h1m9 0h1m9 0h1m10 0h1m9 0h1m9 0h1m9 0h1m10 0h1m9 0h1m9 0h1m9 0h1m9 0h1m10 0h1m9 0h1m9 0h1m9 0h1m10 0h1m9 0h1m9 0h1m9 0h1m10 0h1m9 0h1m9 0h1m9 0h1m10 0h1m9 0h1m9 0h1m9 0h1m10 0h1m9 0h1m9 0h1m9 0h1m10 0h1m9 0h1m9 0h1m9 0h1m10 0h1m9 0h1m9 0h1m9 0h1m10 0h1m9 0h1m9 0h1m9 0h1m10 0h1m9 0h1m9 0h1m9 0h1m10 0h1m9 0h1m9 0h1m9 0h1m10 0h1m9 0h1m9 0h1m9 0h1m10 0h1m9 0h1m9 0h1m9 0h1m10 0h1m9 0h1m9 0h1m9 0h1m10 0h1m9 0h1m9 0h1m9 0h1m10 0h1m9 0h1m9 0h1m9 0h1m10 0h1m9 0h1m9 0h1m9 0h1m10 0h1m9 0h1m9 0h1m9 0h1m10 0h1m9 0h1m9 0h1M95 681.5h1m9 0h1m10 0h1m9 0h1m9 0h1m9 0h1m10 0h1m9 0h1m9 0h1m9 0h1m10 0h1m9 0h1m9 0h1m9 0h1m10 0h1m9 0h1m9 0h1m9 0h1m10 0h1m9 0h1m9 0h1m9 0h1m10 0h1m9 0h1m9 0h1m9 0h1m10 0h1m9 0h1m9 0h1m9 0h1m9 0h1m10 0h1m9 0h1m9 0h1m9 0h1m10 0h1m9 0h1m9 0h1m9 0h1m10 0h1m9 0h1m9 0h1m9 0h1m10 0h1m9 0h1m9 0h1m9 0h1m10 0h1m9 0h1m9 0h1m9 0h1m10 0h1m9 0h1m9 0h1m9 0h1m10 0h1m9 0h1m9 0h1m9 0h1m10 0h1m9 0h1m9 0h1m9 0h1m10 0h1m9 0h1m9 0h1m9 0h1m10 0h1m9 0h1m9 0h1m9 0h1m10 0h1m9 0h1m9 0h1m9 0h1m10 0h1m9 0h1m9 0h1m9 0h1m10 0h1m9 0h1m9 0h1m9 0h1m10 0h1m9 0h1m9 0h1m9 0h1m10 0h1m9 0h1m9 0h1m9 0h1m10 0h1m9 0h1m9 0h1m9 0h1m10 0h1m9 0h1m9 0h1m9 0h1m10 0h1m9 0h1m9 0h1M95 670.5h1m9 0h1m10 0h1m9 0h1m9 0h1m9 0h1m10 0h1m9 0h1m9 0h1m9 0h1m10 0h1m9 0h1m9 0h1m9 0h1m10 0h1m9 0h1m9 0h1m9 0h1m10 0h1m9 0h1m9 0h1m9 0h1m10 0h1m9 0h1m9 0h1m9 0h1m10 0h1m9 0h1m9 0h1m9 0h1m9 0h1m10 0h1m9 0h1m9 0h1m9 0h1m10 0h1m9 0h1m9 0h1m9 0h1m10 0h1m9 0h1m9 0h1m9 0h1m10 0h1m9 0h1m9 0h1m9 0h1m10 0h1m9 0h1m9 0h1m9 0h1m10 0h1m9 0h1m9 0h1m9 0h1m10 0h1m9 0h1m9 0h1m9 0h1m10 0h1m9 0h1m9 0h1m9 0h1m10 0h1m9 0h1m9 0h1m9 0h1m10 0h1m9 0h1m9 0h1m9 0h1m10 0h1m9 0h1m9 0h1m9 0h1m10 0h1m9 0h1m9 0h1m9 0h1m10 0h1m9 0h1m9 0h1m9 0h1m10 0h1m9 0h1m9 0h1m9 0h1m10 0h1m9 0h1m9 0h1m9 0h1m10 0h1m9 0h1m9 0h1m9 0h1m10 0h1m9 0h1m9 0h1m9 0h1m10 0h1m9 0h1m9 0h1M95 660.5h1m9 0h1m10 0h1m9 0h1m9 0h1m9 0h1m10 0h1m9 0h1m9 0h1m9 0h1m10 0h1m9 0h1m9 0h1m9 0h1m10 0h1m9 0h1m9 0h1m9 0h1m10 0h1m9 0h1m9 0h1m9 0h1m10 0h1m9 0h1m9 0h1m9 0h1m10 0h1m9 0h1m9 0h1m9 0h1m9 0h1m10 0h1m9 0h1m9 0h1m9 0h1m10 0h1m9 0h1m9 0h1m9 0h1m10 0h1m9 0h1m9 0h1m9 0h1m10 0h1m9 0h1m9 0h1m9 0h1m10 0h1m9 0h1m9 0h1m9 0h1m10 0h1m9 0h1m9 0h1m9 0h1m10 0h1m9 0h1m9 0h1m9 0h1m10 0h1m9 0h1m9 0h1m9 0h1m10 0h1m9 0h1m9 0h1m9 0h1m10 0h1m9 0h1m9 0h1m9 0h1m10 0h1m9 0h1m9 0h1m9 0h1m10 0h1m9 0h1m9 0h1m9 0h1m10 0h1m9 0h1m9 0h1m9 0h1m10 0h1m9 0h1m9 0h1m9 0h1m10 0h1m9 0h1m9 0h1m9 0h1m10 0h1m9 0h1m9 0h1m9 0h1m10 0h1m9 0h1m9 0h1m9 0h1m10 0h1m9 0h1m9 0h1M95 650.5h1m9 0h1m10 0h1m9 0h1m9 0h1m9 0h1m10 0h1m9 0h1m9 0h1m9 0h1m10 0h1m9 0h1m9 0h1m9 0h1m10 0h1m9 0h1m9 0h1m9 0h1m10 0h1m9 0h1m9 0h1m9 0h1m10 0h1m9 0h1m9 0h1m9 0h1m10 0h1m9 0h1m9 0h1m9 0h1m9 0h1m10 0h1m9 0h1m9 0h1m9 0h1m10 0h1m9 0h1m9 0h1m9 0h1m10 0h1m9 0h1m9 0h1m9 0h1m10 0h1m9 0h1m9 0h1m9 0h1m10 0h1m9 0h1m9 0h1m9 0h1m10 0h1m9 0h1m9 0h1m9 0h1m10 0h1m9 0h1m9 0h1m9 0h1m10 0h1m9 0h1m9 0h1m9 0h1m10 0h1m9 0h1m9 0h1m9 0h1m10 0h1m9 0h1m9 0h1m9 0h1m10 0h1m9 0h1m9 0h1m9 0h1m10 0h1m9 0h1m9 0h1m9 0h1m10 0h1m9 0h1m9 0h1m9 0h1m10 0h1m9 0h1m9 0h1m9 0h1m10 0h1m9 0h1m9 0h1m9 0h1m10 0h1m9 0h1m9 0h1m9 0h1m10 0h1m9 0h1m9 0h1m9 0h1m10 0h1m9 0h1m9 0h1M95 640.5h1m9 0h1m10 0h1m9 0h1m9 0h1m9 0h1m10 0h1m9 0h1m9 0h1m9 0h1m10 0h1m9 0h1m9 0h1m9 0h1m10 0h1m9 0h1m9 0h1m9 0h1m10 0h1m9 0h1m9 0h1m9 0h1m10 0h1m9 0h1m9 0h1m9 0h1m10 0h1m9 0h1m9 0h1m9 0h1m9 0h1m10 0h1m9 0h1m9 0h1m9 0h1m10 0h1m9 0h1m9 0h1m9 0h1m10 0h1m9 0h1m9 0h1m9 0h1m10 0h1m9 0h1m9 0h1m9 0h1m10 0h1m9 0h1m9 0h1m9 0h1m10 0h1m9 0h1m9 0h1m9 0h1m10 0h1m9 0h1m9 0h1m9 0h1m10 0h1m9 0h1m9 0h1m9 0h1m10 0h1m9 0h1m9 0h1m9 0h1m10 0h1m9 0h1m9 0h1m9 0h1m10 0h1m9 0h1m9 0h1m9 0h1m10 0h1m9 0h1m9 0h1m9 0h1m10 0h1m9 0h1m9 0h1m9 0h1m10 0h1m9 0h1m9 0h1m9 0h1m10 0h1m9 0h1m9 0h1m9 0h1m10 0h1m9 0h1m9 0h1m9 0h1m10 0h1m9 0h1m9 0h1m9 0h1m10 0h1m9 0h1m9 0h1M95 629.5h1m9 0h1m10 0h1m9 0h1m9 0h1m9 0h1m10 0h1m9 0h1m9 0h1m9 0h1m10 0h1m9 0h1m9 0h1m9 0h1m10 0h1m9 0h1m9 0h1m9 0h1m10 0h1m9 0h1m9 0h1m9 0h1m10 0h1m9 0h1m9 0h1m9 0h1m10 0h1m9 0h1m9 0h1m9 0h1m9 0h1m10 0h1m9 0h1m9 0h1m9 0h1m10 0h1m9 0h1m9 0h1m9 0h1m10 0h1m9 0h1m9 0h1m9 0h1m10 0h1m9 0h1m9 0h1m9 0h1m10 0h1m9 0h1m9 0h1m9 0h1m10 0h1m9 0h1m9 0h1m9 0h1m10 0h1m9 0h1m9 0h1m9 0h1m10 0h1m9 0h1m9 0h1m9 0h1m10 0h1m9 0h1m9 0h1m9 0h1m10 0h1m9 0h1m9 0h1m9 0h1m10 0h1m9 0h1m9 0h1m9 0h1m10 0h1m9 0h1m9 0h1m9 0h1m10 0h1m9 0h1m9 0h1m9 0h1m10 0h1m9 0h1m9 0h1m9 0h1m10 0h1m9 0h1m9 0h1m9 0h1m10 0h1m9 0h1m9 0h1m9 0h1m10 0h1m9 0h1m9 0h1m9 0h1m10 0h1m9 0h1m9 0h1M95 619.5h1m9 0h1m10 0h1m9 0h1m9 0h1m9 0h1m10 0h1m9 0h1m9 0h1m9 0h1m10 0h1m9 0h1m9 0h1m9 0h1m10 0h1m9 0h1m9 0h1m9 0h1m10 0h1m9 0h1m9 0h1m9 0h1m10 0h1m9 0h1m9 0h1m9 0h1m10 0h1m9 0h1m9 0h1m9 0h1m9 0h1m10 0h1m9 0h1m9 0h1m9 0h1m10 0h1m9 0h1m9 0h1m9 0h1m10 0h1m9 0h1m9 0h1m9 0h1m10 0h1m9 0h1m9 0h1m9 0h1m10 0h1m9 0h1m9 0h1m9 0h1m10 0h1m9 0h1m9 0h1m9 0h1m10 0h1m9 0h1m9 0h1m9 0h1m10 0h1m9 0h1m9 0h1m9 0h1m10 0h1m9 0h1m9 0h1m9 0h1m10 0h1m9 0h1m9 0h1m9 0h1m10 0h1m9 0h1m9 0h1m9 0h1m10 0h1m9 0h1m9 0h1m9 0h1m10 0h1m9 0h1m9 0h1m9 0h1m10 0h1m9 0h1m9 0h1m9 0h1m10 0h1m9 0h1m9 0h1m9 0h1m10 0h1m9 0h1m9 0h1m9 0h1m10 0h1m9 0h1m9 0h1m9 0h1m10 0h1m9 0h1m9 0h1M95 609.5h1m9 0h1m10 0h1m9 0h1m9 0h1m9 0h1m10 0h1m9 0h1m9 0h1m9 0h1m10 0h1m9 0h1m9 0h1m9 0h1m10 0h1m9 0h1m9 0h1m9 0h1m10 0h1m9 0h1m9 0h1m9 0h1m10 0h1m9 0h1m9 0h1m9 0h1m10 0h1m9 0h1m9 0h1m9 0h1m9 0h1m10 0h1m9 0h1m9 0h1m9 0h1m10 0h1m9 0h1m9 0h1m9 0h1m10 0h1m9 0h1m9 0h1m9 0h1m10 0h1m9 0h1m9 0h1m9 0h1m10 0h1m9 0h1m9 0h1m9 0h1m10 0h1m9 0h1m9 0h1m9 0h1m10 0h1m9 0h1m9 0h1m9 0h1m10 0h1m9 0h1m9 0h1m9 0h1m10 0h1m9 0h1m9 0h1m9 0h1m10 0h1m9 0h1m9 0h1m9 0h1m10 0h1m9 0h1m9 0h1m9 0h1m10 0h1m9 0h1m9 0h1m9 0h1m10 0h1m9 0h1m9 0h1m9 0h1m10 0h1m9 0h1m9 0h1m9 0h1m10 0h1m9 0h1m9 0h1m9 0h1m10 0h1m9 0h1m9 0h1m9 0h1m10 0h1m9 0h1m9 0h1m9 0h1m10 0h1m9 0h1m9 0h1M95 599.5h1m9 0h1m10 0h1m9 0h1m9 0h1m9 0h1m10 0h1m9 0h1m9 0h1m9 0h1m10 0h1m9 0h1m9 0h1m9 0h1m10 0h1m9 0h1m9 0h1m9 0h1m10 0h1m9 0h1m9 0h1m9 0h1m10 0h1m9 0h1m9 0h1m9 0h1m10 0h1m9 0h1m9 0h1m9 0h1m9 0h1m10 0h1m9 0h1m9 0h1m9 0h1m10 0h1m9 0h1m9 0h1m9 0h1m10 0h1m9 0h1m9 0h1m9 0h1m10 0h1m9 0h1m9 0h1m9 0h1m10 0h1m9 0h1m9 0h1m9 0h1m10 0h1m9 0h1m9 0h1m9 0h1m10 0h1m9 0h1m9 0h1m9 0h1m10 0h1m9 0h1m9 0h1m9 0h1m10 0h1m9 0h1m9 0h1m9 0h1m10 0h1m9 0h1m9 0h1m9 0h1m10 0h1m9 0h1m9 0h1m9 0h1m10 0h1m9 0h1m9 0h1m9 0h1m10 0h1m9 0h1m9 0h1m9 0h1m10 0h1m9 0h1m9 0h1m9 0h1m10 0h1m9 0h1m9 0h1m9 0h1m10 0h1m9 0h1m9 0h1m9 0h1m10 0h1m9 0h1m9 0h1m9 0h1m10 0h1m9 0h1m9 0h1M95 588.5h1m9 0h1m10 0h1m9 0h1m9 0h1m9 0h1m10 0h1m9 0h1m9 0h1m9 0h1m10 0h1m9 0h1m9 0h1m9 0h1m10 0h1m9 0h1m9 0h1m9 0h1m10 0h1m9 0h1m9 0h1m9 0h1m10 0h1m9 0h1m9 0h1m9 0h1m10 0h1m9 0h1m9 0h1m9 0h1m9 0h1m10 0h1m9 0h1m9 0h1m9 0h1m10 0h1m9 0h1m9 0h1m9 0h1m10 0h1m9 0h1m9 0h1m9 0h1m10 0h1m9 0h1m9 0h1m9 0h1m10 0h1m9 0h1m9 0h1m9 0h1m10 0h1m9 0h1m9 0h1m9 0h1m10 0h1m9 0h1m9 0h1m9 0h1m10 0h1m9 0h1m9 0h1m9 0h1m10 0h1m9 0h1m9 0h1m9 0h1m10 0h1m9 0h1m9 0h1m9 0h1m10 0h1m9 0h1m9 0h1m9 0h1m10 0h1m9 0h1m9 0h1m9 0h1m10 0h1m9 0h1m9 0h1m9 0h1m10 0h1m9 0h1m9 0h1m9 0h1m10 0h1m9 0h1m9 0h1m9 0h1m10 0h1m9 0h1m9 0h1m9 0h1m10 0h1m9 0h1m9 0h1m9 0h1m10 0h1m9 0h1m9 0h1M95 578.5h1m9 0h1m10 0h1m9 0h1m9 0h1m9 0h1m10 0h1m9 0h1m9 0h1m9 0h1m10 0h1m9 0h1m9 0h1m9 0h1m10 0h1m9 0h1m9 0h1m9 0h1m10 0h1m9 0h1m9 0h1m9 0h1m10 0h1m9 0h1m9 0h1m9 0h1m10 0h1m9 0h1m9 0h1m9 0h1m9 0h1m10 0h1m9 0h1m9 0h1m9 0h1m10 0h1m9 0h1m9 0h1m9 0h1m10 0h1m9 0h1m9 0h1m9 0h1m10 0h1m9 0h1m9 0h1m9 0h1m10 0h1m9 0h1m9 0h1m9 0h1m10 0h1m9 0h1m9 0h1m9 0h1m10 0h1m9 0h1m9 0h1m9 0h1m10 0h1m9 0h1m9 0h1m9 0h1m10 0h1m9 0h1m9 0h1m9 0h1m10 0h1m9 0h1m9 0h1m9 0h1m10 0h1m9 0h1m9 0h1m9 0h1m10 0h1m9 0h1m9 0h1m9 0h1m10 0h1m9 0h1m9 0h1m9 0h1m10 0h1m9 0h1m9 0h1m9 0h1m10 0h1m9 0h1m9 0h1m9 0h1m10 0h1m9 0h1m9 0h1m9 0h1m10 0h1m9 0h1m9 0h1m9 0h1m10 0h1m9 0h1m9 0h1M95 568.5h1m9 0h1m10 0h1m9 0h1m9 0h1m9 0h1m10 0h1m9 0h1m9 0h1m9 0h1m10 0h1m9 0h1m9 0h1m9 0h1m10 0h1m9 0h1m9 0h1m9 0h1m10 0h1m9 0h1m9 0h1m9 0h1m10 0h1m9 0h1m9 0h1m9 0h1m10 0h1m9 0h1m9 0h1m9 0h1m9 0h1m10 0h1m9 0h1m9 0h1m9 0h1m10 0h1m9 0h1m9 0h1m9 0h1m10 0h1m9 0h1m9 0h1m9 0h1m10 0h1m9 0h1m9 0h1m9 0h1m10 0h1m9 0h1m9 0h1m9 0h1m10 0h1m9 0h1m9 0h1m9 0h1m10 0h1m9 0h1m9 0h1m9 0h1m10 0h1m9 0h1m9 0h1m9 0h1m10 0h1m9 0h1m9 0h1m9 0h1m10 0h1m9 0h1m9 0h1m9 0h1m10 0h1m9 0h1m9 0h1m9 0h1m10 0h1m9 0h1m9 0h1m9 0h1m10 0h1m9 0h1m9 0h1m9 0h1m10 0h1m9 0h1m9 0h1m9 0h1m10 0h1m9 0h1m9 0h1m9 0h1m10 0h1m9 0h1m9 0h1m9 0h1m10 0h1m9 0h1m9 0h1m9 0h1m10 0h1m9 0h1m9 0h1M95 558.5h1m9 0h1m10 0h1m9 0h1m9 0h1m9 0h1m10 0h1m9 0h1m9 0h1m9 0h1m10 0h1m9 0h1m9 0h1m9 0h1m10 0h1m9 0h1m9 0h1m9 0h1m10 0h1m9 0h1m9 0h1m9 0h1m10 0h1m9 0h1m9 0h1m9 0h1m10 0h1m9 0h1m9 0h1m9 0h1m9 0h1m10 0h1m9 0h1m9 0h1m9 0h1m10 0h1m9 0h1m9 0h1m9 0h1m10 0h1m9 0h1m9 0h1m9 0h1m10 0h1m9 0h1m9 0h1m9 0h1m10 0h1m9 0h1m9 0h1m9 0h1m10 0h1m9 0h1m9 0h1m9 0h1m10 0h1m9 0h1m9 0h1m9 0h1m10 0h1m9 0h1m9 0h1m9 0h1m10 0h1m9 0h1m9 0h1m9 0h1m10 0h1m9 0h1m9 0h1m9 0h1m10 0h1m9 0h1m9 0h1m9 0h1m10 0h1m9 0h1m9 0h1m9 0h1m10 0h1m9 0h1m9 0h1m9 0h1m10 0h1m9 0h1m9 0h1m9 0h1m10 0h1m9 0h1m9 0h1m9 0h1m10 0h1m9 0h1m9 0h1m9 0h1m10 0h1m9 0h1m9 0h1m9 0h1m10 0h1m9 0h1m9 0h1M95 547.5h1m9 0h1m10 0h1m9 0h1m9 0h1m9 0h1m10 0h1m9 0h1m9 0h1m9 0h1m10 0h1m9 0h1m9 0h1m9 0h1m10 0h1m9 0h1m9 0h1m9 0h1m10 0h1m9 0h1m9 0h1m9 0h1m10 0h1m9 0h1m9 0h1m9 0h1m10 0h1m9 0h1m9 0h1m9 0h1m9 0h1m10 0h1m9 0h1m9 0h1m9 0h1m10 0h1m9 0h1m9 0h1m9 0h1m10 0h1m9 0h1m9 0h1m9 0h1m10 0h1m9 0h1m9 0h1m9 0h1m10 0h1m9 0h1m9 0h1m9 0h1m10 0h1m9 0h1m9 0h1m9 0h1m10 0h1m9 0h1m9 0h1m9 0h1m10 0h1m9 0h1m9 0h1m9 0h1m10 0h1m9 0h1m9 0h1m9 0h1m10 0h1m9 0h1m9 0h1m9 0h1m10 0h1m9 0h1m9 0h1m9 0h1m10 0h1m9 0h1m9 0h1m9 0h1m10 0h1m9 0h1m9 0h1m9 0h1m10 0h1m9 0h1m9 0h1m9 0h1m10 0h1m9 0h1m9 0h1m9 0h1m10 0h1m9 0h1m9 0h1m9 0h1m10 0h1m9 0h1m9 0h1m9 0h1m10 0h1m9 0h1m9 0h1M95 537.5h1m9 0h1m10 0h1m9 0h1m9 0h1m9 0h1m10 0h1m9 0h1m9 0h1m9 0h1m10 0h1m9 0h1m9 0h1m9 0h1m10 0h1m9 0h1m9 0h1m9 0h1m10 0h1m9 0h1m9 0h1m9 0h1m10 0h1m9 0h1m9 0h1m9 0h1m10 0h1m9 0h1m9 0h1m9 0h1m9 0h1m10 0h1m9 0h1m9 0h1m9 0h1m10 0h1m9 0h1m9 0h1m9 0h1m10 0h1m9 0h1m9 0h1m9 0h1m10 0h1m9 0h1m9 0h1m9 0h1m10 0h1m9 0h1m9 0h1m9 0h1m10 0h1m9 0h1m9 0h1m9 0h1m10 0h1m9 0h1m9 0h1m9 0h1m10 0h1m9 0h1m9 0h1m9 0h1m10 0h1m9 0h1m9 0h1m9 0h1m10 0h1m9 0h1m9 0h1m9 0h1m10 0h1m9 0h1m9 0h1m9 0h1m10 0h1m9 0h1m9 0h1m9 0h1m10 0h1m9 0h1m9 0h1m9 0h1m10 0h1m9 0h1m9 0h1m9 0h1m10 0h1m9 0h1m9 0h1m9 0h1m10 0h1m9 0h1m9 0h1m9 0h1m10 0h1m9 0h1m9 0h1m9 0h1m10 0h1m9 0h1m9 0h1M95 527.5h1m9 0h1m10 0h1m9 0h1m9 0h1m9 0h1m10 0h1m9 0h1m9 0h1m9 0h1m10 0h1m9 0h1m9 0h1m9 0h1m10 0h1m9 0h1m9 0h1m9 0h1m10 0h1m9 0h1m9 0h1m9 0h1m10 0h1m9 0h1m9 0h1m9 0h1m10 0h1m9 0h1m9 0h1m9 0h1m9 0h1m10 0h1m9 0h1m9 0h1m9 0h1m10 0h1m9 0h1m9 0h1m9 0h1m10 0h1m9 0h1m9 0h1m9 0h1m10 0h1m9 0h1m9 0h1m9 0h1m10 0h1m9 0h1m9 0h1m9 0h1m10 0h1m9 0h1m9 0h1m9 0h1m10 0h1m9 0h1m9 0h1m9 0h1m10 0h1m9 0h1m9 0h1m9 0h1m10 0h1m9 0h1m9 0h1m9 0h1m10 0h1m9 0h1m9 0h1m9 0h1m10 0h1m9 0h1m9 0h1m9 0h1m10 0h1m9 0h1m9 0h1m9 0h1m10 0h1m9 0h1m9 0h1m9 0h1m10 0h1m9 0h1m9 0h1m9 0h1m10 0h1m9 0h1m9 0h1m9 0h1m10 0h1m9 0h1m9 0h1m9 0h1m10 0h1m9 0h1m9 0h1m9 0h1m10 0h1m9 0h1m9 0h1M95 517.5h1m9 0h1m10 0h1m9 0h1m9 0h1m9 0h1m10 0h1m9 0h1m9 0h1m9 0h1m10 0h1m9 0h1m9 0h1m9 0h1m10 0h1m9 0h1m9 0h1m9 0h1m10 0h1m9 0h1m9 0h1m9 0h1m10 0h1m9 0h1m9 0h1m9 0h1m10 0h1m9 0h1m9 0h1m9 0h1m9 0h1m10 0h1m9 0h1m9 0h1m9 0h1m10 0h1m9 0h1m9 0h1m9 0h1m10 0h1m9 0h1m9 0h1m9 0h1m10 0h1m9 0h1m9 0h1m9 0h1m10 0h1m9 0h1m9 0h1m9 0h1m10 0h1m9 0h1m9 0h1m9 0h1m10 0h1m9 0h1m9 0h1m9 0h1m10 0h1m9 0h1m9 0h1m9 0h1m10 0h1m9 0h1m9 0h1m9 0h1m10 0h1m9 0h1m9 0h1m9 0h1m10 0h1m9 0h1m9 0h1m9 0h1m10 0h1m9 0h1m9 0h1m9 0h1m10 0h1m9 0h1m9 0h1m9 0h1m10 0h1m9 0h1m9 0h1m9 0h1m10 0h1m9 0h1m9 0h1m9 0h1m10 0h1m9 0h1m9 0h1m9 0h1m10 0h1m9 0h1m9 0h1m9 0h1m10 0h1m9 0h1m9 0h1M95 506.5h1m9 0h1m10 0h1m9 0h1m9 0h1m9 0h1m10 0h1m9 0h1m9 0h1m9 0h1m10 0h1m9 0h1m9 0h1m9 0h1m10 0h1m9 0h1m9 0h1m9 0h1m10 0h1m9 0h1m9 0h1m9 0h1m10 0h1m9 0h1m9 0h1m9 0h1m10 0h1m9 0h1m9 0h1m9 0h1m9 0h1m10 0h1m9 0h1m9 0h1m9 0h1m10 0h1m9 0h1m9 0h1m9 0h1m10 0h1m9 0h1m9 0h1m9 0h1m10 0h1m9 0h1m9 0h1m9 0h1m10 0h1m9 0h1m9 0h1m9 0h1m10 0h1m9 0h1m9 0h1m9 0h1m10 0h1m9 0h1m9 0h1m9 0h1m10 0h1m9 0h1m9 0h1m9 0h1m10 0h1m9 0h1m9 0h1m9 0h1m10 0h1m9 0h1m9 0h1m9 0h1m10 0h1m9 0h1m9 0h1m9 0h1m10 0h1m9 0h1m9 0h1m9 0h1m10 0h1m9 0h1m9 0h1m9 0h1m10 0h1m9 0h1m9 0h1m9 0h1m10 0h1m9 0h1m9 0h1m9 0h1m10 0h1m9 0h1m9 0h1m9 0h1m10 0h1m9 0h1m9 0h1m9 0h1m10 0h1m9 0h1m9 0h1M95 496.5h1m9 0h1m10 0h1m9 0h1m9 0h1m9 0h1m10 0h1m9 0h1m9 0h1m9 0h1m10 0h1m9 0h1m9 0h1m9 0h1m10 0h1m9 0h1m9 0h1m9 0h1m10 0h1m9 0h1m9 0h1m9 0h1m10 0h1m9 0h1m9 0h1m9 0h1m10 0h1m9 0h1m9 0h1m9 0h1m9 0h1m10 0h1m9 0h1m9 0h1m9 0h1m10 0h1m9 0h1m9 0h1m9 0h1m10 0h1m9 0h1m9 0h1m9 0h1m10 0h1m9 0h1m9 0h1m9 0h1m10 0h1m9 0h1m9 0h1m9 0h1m10 0h1m9 0h1m9 0h1m9 0h1m10 0h1m9 0h1m9 0h1m9 0h1m10 0h1m9 0h1m9 0h1m9 0h1m10 0h1m9 0h1m9 0h1m9 0h1m10 0h1m9 0h1m9 0h1m9 0h1m10 0h1m9 0h1m9 0h1m9 0h1m10 0h1m9 0h1m9 0h1m9 0h1m10 0h1m9 0h1m9 0h1m9 0h1m10 0h1m9 0h1m9 0h1m9 0h1m10 0h1m9 0h1m9 0h1m9 0h1m10 0h1m9 0h1m9 0h1m9 0h1m10 0h1m9 0h1m9 0h1m9 0h1m10 0h1m9 0h1m9 0h1M95 486.5h1m9 0h1m10 0h1m9 0h1m9 0h1m9 0h1m10 0h1m9 0h1m9 0h1m9 0h1m10 0h1m9 0h1m9 0h1m9 0h1m10 0h1m9 0h1m9 0h1m9 0h1m10 0h1m9 0h1m9 0h1m9 0h1m10 0h1m9 0h1m9 0h1m9 0h1m10 0h1m9 0h1m9 0h1m9 0h1m9 0h1m10 0h1m9 0h1m9 0h1m9 0h1m10 0h1m9 0h1m9 0h1m9 0h1m10 0h1m9 0h1m9 0h1m9 0h1m10 0h1m9 0h1m9 0h1m9 0h1m10 0h1m9 0h1m9 0h1m9 0h1m10 0h1m9 0h1m9 0h1m9 0h1m10 0h1m9 0h1m9 0h1m9 0h1m10 0h1m9 0h1m9 0h1m9 0h1m10 0h1m9 0h1m9 0h1m9 0h1m10 0h1m9 0h1m9 0h1m9 0h1m10 0h1m9 0h1m9 0h1m9 0h1m10 0h1m9 0h1m9 0h1m9 0h1m10 0h1m9 0h1m9 0h1m9 0h1m10 0h1m9 0h1m9 0h1m9 0h1m10 0h1m9 0h1m9 0h1m9 0h1m10 0h1m9 0h1m9 0h1m9 0h1m10 0h1m9 0h1m9 0h1m9 0h1m10 0h1m9 0h1m9 0h1M95 476.5h1m9 0h1m10 0h1m9 0h1m9 0h1m9 0h1m10 0h1m9 0h1m9 0h1m9 0h1m10 0h1m9 0h1m9 0h1m9 0h1m10 0h1m9 0h1m9 0h1m9 0h1m10 0h1m9 0h1m9 0h1m9 0h1m10 0h1m9 0h1m9 0h1m9 0h1m10 0h1m9 0h1m9 0h1m9 0h1m9 0h1m10 0h1m9 0h1m9 0h1m9 0h1m10 0h1m9 0h1m9 0h1m9 0h1m10 0h1m9 0h1m9 0h1m9 0h1m10 0h1m9 0h1m9 0h1m9 0h1m10 0h1m9 0h1m9 0h1m9 0h1m10 0h1m9 0h1m9 0h1m9 0h1m10 0h1m9 0h1m9 0h1m9 0h1m10 0h1m9 0h1m9 0h1m9 0h1m10 0h1m9 0h1m9 0h1m9 0h1m10 0h1m9 0h1m9 0h1m9 0h1m10 0h1m9 0h1m9 0h1m9 0h1m10 0h1m9 0h1m9 0h1m9 0h1m10 0h1m9 0h1m9 0h1m9 0h1m10 0h1m9 0h1m9 0h1m9 0h1m10 0h1m9 0h1m9 0h1m9 0h1m10 0h1m9 0h1m9 0h1m9 0h1m10 0h1m9 0h1m9 0h1m9 0h1m10 0h1m9 0h1m9 0h1M95 465.5h1m9 0h1m10 0h1m9 0h1m9 0h1m9 0h1m10 0h1m9 0h1m9 0h1m9 0h1m10 0h1m9 0h1m9 0h1m9 0h1m10 0h1m9 0h1m9 0h1m9 0h1m10 0h1m9 0h1m9 0h1m9 0h1m10 0h1m9 0h1m9 0h1m9 0h1m10 0h1m9 0h1m9 0h1m9 0h1m9 0h1m10 0h1m9 0h1m9 0h1m9 0h1m10 0h1m9 0h1m9 0h1m9 0h1m10 0h1m9 0h1m9 0h1m9 0h1m10 0h1m9 0h1m9 0h1m9 0h1m10 0h1m9 0h1m9 0h1m9 0h1m10 0h1m9 0h1m9 0h1m9 0h1m10 0h1m9 0h1m9 0h1m9 0h1m10 0h1m9 0h1m9 0h1m9 0h1m10 0h1m9 0h1m9 0h1m9 0h1m10 0h1m9 0h1m9 0h1m9 0h1m10 0h1m9 0h1m9 0h1m9 0h1m10 0h1m9 0h1m9 0h1m9 0h1m10 0h1m9 0h1m9 0h1m9 0h1m10 0h1m9 0h1m9 0h1m9 0h1m10 0h1m9 0h1m9 0h1m9 0h1m10 0h1m9 0h1m9 0h1m9 0h1m10 0h1m9 0h1m9 0h1m9 0h1m10 0h1m9 0h1m9 0h1M95 455.5h1m9 0h1m10 0h1m9 0h1m9 0h1m9 0h1m10 0h1m9 0h1m9 0h1m9 0h1m10 0h1m9 0h1m9 0h1m9 0h1m10 0h1m9 0h1m9 0h1m9 0h1m10 0h1m9 0h1m9 0h1m9 0h1m10 0h1m9 0h1m9 0h1m9 0h1m10 0h1m9 0h1m9 0h1m9 0h1m9 0h1m10 0h1m9 0h1m9 0h1m9 0h1m10 0h1m9 0h1m9 0h1m9 0h1m10 0h1m9 0h1m9 0h1m9 0h1m10 0h1m9 0h1m9 0h1m9 0h1m10 0h1m9 0h1m9 0h1m9 0h1m10 0h1m9 0h1m9 0h1m9 0h1m10 0h1m9 0h1m9 0h1m9 0h1m10 0h1m9 0h1m9 0h1m9 0h1m10 0h1m9 0h1m9 0h1m9 0h1m10 0h1m9 0h1m9 0h1m9 0h1m10 0h1m9 0h1m9 0h1m9 0h1m10 0h1m9 0h1m9 0h1m9 0h1m10 0h1m9 0h1m9 0h1m9 0h1m10 0h1m9 0h1m9 0h1m9 0h1m10 0h1m9 0h1m9 0h1m9 0h1m10 0h1m9 0h1m9 0h1m9 0h1m10 0h1m9 0h1m9 0h1m9 0h1m10 0h1m9 0h1m9 0h1M95 445.5h1m9 0h1m10 0h1m9 0h1m9 0h1m9 0h1m10 0h1m9 0h1m9 0h1m9 0h1m10 0h1m9 0h1m9 0h1m9 0h1m10 0h1m9 0h1m9 0h1m9 0h1m10 0h1m9 0h1m9 0h1m9 0h1m10 0h1m9 0h1m9 0h1m9 0h1m10 0h1m9 0h1m9 0h1m9 0h1m9 0h1m10 0h1m9 0h1m9 0h1m9 0h1m10 0h1m9 0h1m9 0h1m9 0h1m10 0h1m9 0h1m9 0h1m9 0h1m10 0h1m9 0h1m9 0h1m9 0h1m10 0h1m9 0h1m9 0h1m9 0h1m10 0h1m9 0h1m9 0h1m9 0h1m10 0h1m9 0h1m9 0h1m9 0h1m10 0h1m9 0h1m9 0h1m9 0h1m10 0h1m9 0h1m9 0h1m9 0h1m10 0h1m9 0h1m9 0h1m9 0h1m10 0h1m9 0h1m9 0h1m9 0h1m10 0h1m9 0h1m9 0h1m9 0h1m10 0h1m9 0h1m9 0h1m9 0h1m10 0h1m9 0h1m9 0h1m9 0h1m10 0h1m9 0h1m9 0h1m9 0h1m10 0h1m9 0h1m9 0h1m9 0h1m10 0h1m9 0h1m9 0h1m9 0h1m10 0h1m9 0h1m9 0h1M95 435.5h1m9 0h1m10 0h1m9 0h1m9 0h1m9 0h1m10 0h1m9 0h1m9 0h1m9 0h1m10 0h1m9 0h1m9 0h1m9 0h1m10 0h1m9 0h1m9 0h1m9 0h1m10 0h1m9 0h1m9 0h1m9 0h1m10 0h1m9 0h1m9 0h1m9 0h1m10 0h1m9 0h1m9 0h1m9 0h1m9 0h1m10 0h1m9 0h1m9 0h1m9 0h1m10 0h1m9 0h1m9 0h1m9 0h1m10 0h1m9 0h1m9 0h1m9 0h1m10 0h1m9 0h1m9 0h1m9 0h1m10 0h1m9 0h1m9 0h1m9 0h1m10 0h1m9 0h1m9 0h1m9 0h1m10 0h1m9 0h1m9 0h1m9 0h1m10 0h1m9 0h1m9 0h1m9 0h1m10 0h1m9 0h1m9 0h1m9 0h1m10 0h1m9 0h1m9 0h1m9 0h1m10 0h1m9 0h1m9 0h1m9 0h1m10 0h1m9 0h1m9 0h1m9 0h1m10 0h1m9 0h1m9 0h1m9 0h1m10 0h1m9 0h1m9 0h1m9 0h1m10 0h1m9 0h1m9 0h1m9 0h1m10 0h1m9 0h1m9 0h1m9 0h1m10 0h1m9 0h1m9 0h1m9 0h1m10 0h1m9 0h1m9 0h1M95 424.5h1m9 0h1m10 0h1m9 0h1m9 0h1m9 0h1m10 0h1m9 0h1m9 0h1m9 0h1m10 0h1m9 0h1m9 0h1m9 0h1m10 0h1m9 0h1m9 0h1m9 0h1m10 0h1m9 0h1m9 0h1m9 0h1m10 0h1m9 0h1m9 0h1m9 0h1m10 0h1m9 0h1m9 0h1m9 0h1m9 0h1m10 0h1m9 0h1m9 0h1m9 0h1m10 0h1m9 0h1m9 0h1m9 0h1m10 0h1m9 0h1m9 0h1m9 0h1m10 0h1m9 0h1m9 0h1m9 0h1m10 0h1m9 0h1m9 0h1m9 0h1m10 0h1m9 0h1m9 0h1m9 0h1m10 0h1m9 0h1m9 0h1m9 0h1m10 0h1m9 0h1m9 0h1m9 0h1m10 0h1m9 0h1m9 0h1m9 0h1m10 0h1m9 0h1m9 0h1m9 0h1m10 0h1m9 0h1m9 0h1m9 0h1m10 0h1m9 0h1m9 0h1m9 0h1m10 0h1m9 0h1m9 0h1m9 0h1m10 0h1m9 0h1m9 0h1m9 0h1m10 0h1m9 0h1m9 0h1m9 0h1m10 0h1m9 0h1m9 0h1m9 0h1m10 0h1m9 0h1m9 0h1m9 0h1m10 0h1m9 0h1m9 0h1M95 414.5h1m9 0h1m10 0h1m9 0h1m9 0h1m9 0h1m10 0h1m9 0h1m9 0h1m9 0h1m10 0h1m9 0h1m9 0h1m9 0h1m10 0h1m9 0h1m9 0h1m9 0h1m10 0h1m9 0h1m9 0h1m9 0h1m10 0h1m9 0h1m9 0h1m9 0h1m10 0h1m9 0h1m9 0h1m9 0h1m9 0h1m10 0h1m9 0h1m9 0h1m9 0h1m10 0h1m9 0h1m9 0h1m9 0h1m10 0h1m9 0h1m9 0h1m9 0h1m10 0h1m9 0h1m9 0h1m9 0h1m10 0h1m9 0h1m9 0h1m9 0h1m10 0h1m9 0h1m9 0h1m9 0h1m10 0h1m9 0h1m9 0h1m9 0h1m10 0h1m9 0h1m9 0h1m9 0h1m10 0h1m9 0h1m9 0h1m9 0h1m10 0h1m9 0h1m9 0h1m9 0h1m10 0h1m9 0h1m9 0h1m9 0h1m10 0h1m9 0h1m9 0h1m9 0h1m10 0h1m9 0h1m9 0h1m9 0h1m10 0h1m9 0h1m9 0h1m9 0h1m10 0h1m9 0h1m9 0h1m9 0h1m10 0h1m9 0h1m9 0h1m9 0h1m10 0h1m9 0h1m9 0h1m9 0h1m10 0h1m9 0h1m9 0h1M95 404.5h1m9 0h1m10 0h1m9 0h1m9 0h1m9 0h1m10 0h1m9 0h1m9 0h1m9 0h1m10 0h1m9 0h1m9 0h1m9 0h1m10 0h1m9 0h1m9 0h1m9 0h1m10 0h1m9 0h1m9 0h1m9 0h1m10 0h1m9 0h1m9 0h1m9 0h1m10 0h1m9 0h1m9 0h1m9 0h1m9 0h1m10 0h1m9 0h1m9 0h1m9 0h1m10 0h1m9 0h1m9 0h1m9 0h1m10 0h1m9 0h1m9 0h1m9 0h1m10 0h1m9 0h1m9 0h1m9 0h1m10 0h1m9 0h1m9 0h1m9 0h1m10 0h1m9 0h1m9 0h1m9 0h1m10 0h1m9 0h1m9 0h1m9 0h1m10 0h1m9 0h1m9 0h1m9 0h1m10 0h1m9 0h1m9 0h1m9 0h1m10 0h1m9 0h1m9 0h1m9 0h1m10 0h1m9 0h1m9 0h1m9 0h1m10 0h1m9 0h1m9 0h1m9 0h1m10 0h1m9 0h1m9 0h1m9 0h1m10 0h1m9 0h1m9 0h1m9 0h1m10 0h1m9 0h1m9 0h1m9 0h1m10 0h1m9 0h1m9 0h1m9 0h1m10 0h1m9 0h1m9 0h1m9 0h1m10 0h1m9 0h1m9 0h1M95 394.5h1m9 0h1m10 0h1m9 0h1m9 0h1m9 0h1m10 0h1m9 0h1m9 0h1m9 0h1m10 0h1m9 0h1m9 0h1m9 0h1m10 0h1m9 0h1m9 0h1m9 0h1m10 0h1m9 0h1m9 0h1m9 0h1m10 0h1m9 0h1m9 0h1m9 0h1m10 0h1m9 0h1m9 0h1m9 0h1m9 0h1m10 0h1m9 0h1m9 0h1m9 0h1m10 0h1m9 0h1m9 0h1m9 0h1m10 0h1m9 0h1m9 0h1m9 0h1m10 0h1m9 0h1m9 0h1m9 0h1m10 0h1m9 0h1m9 0h1m9 0h1m10 0h1m9 0h1m9 0h1m9 0h1m10 0h1m9 0h1m9 0h1m9 0h1m10 0h1m9 0h1m9 0h1m9 0h1m10 0h1m9 0h1m9 0h1m9 0h1m10 0h1m9 0h1m9 0h1m9 0h1m10 0h1m9 0h1m9 0h1m9 0h1m10 0h1m9 0h1m9 0h1m9 0h1m10 0h1m9 0h1m9 0h1m9 0h1m10 0h1m9 0h1m9 0h1m9 0h1m10 0h1m9 0h1m9 0h1m9 0h1m10 0h1m9 0h1m9 0h1m9 0h1m10 0h1m9 0h1m9 0h1m9 0h1m10 0h1m9 0h1m9 0h1M95 383.5h1m9 0h1m10 0h1m9 0h1m9 0h1m9 0h1m10 0h1m9 0h1m9 0h1m9 0h1m10 0h1m9 0h1m9 0h1m9 0h1m10 0h1m9 0h1m9 0h1m9 0h1m10 0h1m9 0h1m9 0h1m9 0h1m10 0h1m9 0h1m9 0h1m9 0h1m10 0h1m9 0h1m9 0h1m9 0h1m9 0h1m10 0h1m9 0h1m9 0h1m9 0h1m10 0h1m9 0h1m9 0h1m9 0h1m10 0h1m9 0h1m9 0h1m9 0h1m10 0h1m9 0h1m9 0h1m9 0h1m10 0h1m9 0h1m9 0h1m9 0h1m10 0h1m9 0h1m9 0h1m9 0h1m10 0h1m9 0h1m9 0h1m9 0h1m10 0h1m9 0h1m9 0h1m9 0h1m10 0h1m9 0h1m9 0h1m9 0h1m10 0h1m9 0h1m9 0h1m9 0h1m10 0h1m9 0h1m9 0h1m9 0h1m10 0h1m9 0h1m9 0h1m9 0h1m10 0h1m9 0h1m9 0h1m9 0h1m10 0h1m9 0h1m9 0h1m9 0h1m10 0h1m9 0h1m9 0h1m9 0h1m10 0h1m9 0h1m9 0h1m9 0h1m10 0h1m9 0h1m9 0h1m9 0h1m10 0h1m9 0h1m9 0h1M95 373.5h1m9 0h1m10 0h1m9 0h1m9 0h1m9 0h1m10 0h1m9 0h1m9 0h1m9 0h1m10 0h1m9 0h1m9 0h1m9 0h1m10 0h1m9 0h1m9 0h1m9 0h1m10 0h1m9 0h1m9 0h1m9 0h1m10 0h1m9 0h1m9 0h1m9 0h1m10 0h1m9 0h1m9 0h1m9 0h1m9 0h1m10 0h1m9 0h1m9 0h1m9 0h1m10 0h1m9 0h1m9 0h1m9 0h1m10 0h1m9 0h1m9 0h1m9 0h1m10 0h1m9 0h1m9 0h1m9 0h1m10 0h1m9 0h1m9 0h1m9 0h1m10 0h1m9 0h1m9 0h1m9 0h1m10 0h1m9 0h1m9 0h1m9 0h1m10 0h1m9 0h1m9 0h1m9 0h1m10 0h1m9 0h1m9 0h1m9 0h1m10 0h1m9 0h1m9 0h1m9 0h1m10 0h1m9 0h1m9 0h1m9 0h1m10 0h1m9 0h1m9 0h1m9 0h1m10 0h1m9 0h1m9 0h1m9 0h1m10 0h1m9 0h1m9 0h1m9 0h1m10 0h1m9 0h1m9 0h1m9 0h1m10 0h1m9 0h1m9 0h1m9 0h1m10 0h1m9 0h1m9 0h1m9 0h1m10 0h1m9 0h1m9 0h1M95 363.5h1m9 0h1m10 0h1m9 0h1m9 0h1m9 0h1m10 0h1m9 0h1m9 0h1m9 0h1m10 0h1m9 0h1m9 0h1m9 0h1m10 0h1m9 0h1m9 0h1m9 0h1m10 0h1m9 0h1m9 0h1m9 0h1m10 0h1m9 0h1m9 0h1m9 0h1m10 0h1m9 0h1m9 0h1m9 0h1m9 0h1m10 0h1m9 0h1m9 0h1m9 0h1m10 0h1m9 0h1m9 0h1m9 0h1m10 0h1m9 0h1m9 0h1m9 0h1m10 0h1m9 0h1m9 0h1m9 0h1m10 0h1m9 0h1m9 0h1m9 0h1m10 0h1m9 0h1m9 0h1m9 0h1m10 0h1m9 0h1m9 0h1m9 0h1m10 0h1m9 0h1m9 0h1m9 0h1m10 0h1m9 0h1m9 0h1m9 0h1m10 0h1m9 0h1m9 0h1m9 0h1m10 0h1m9 0h1m9 0h1m9 0h1m10 0h1m9 0h1m9 0h1m9 0h1m10 0h1m9 0h1m9 0h1m9 0h1m10 0h1m9 0h1m9 0h1m9 0h1m10 0h1m9 0h1m9 0h1m9 0h1m10 0h1m9 0h1m9 0h1m9 0h1m10 0h1m9 0h1m9 0h1m9 0h1m10 0h1m9 0h1m9 0h1M95 353.5h1m9 0h1m10 0h1m9 0h1m9 0h1m9 0h1m10 0h1m9 0h1m9 0h1m9 0h1m10 0h1m9 0h1m9 0h1m9 0h1m10 0h1m9 0h1m9 0h1m9 0h1m10 0h1m9 0h1m9 0h1m9 0h1m10 0h1m9 0h1m9 0h1m9 0h1m10 0h1m9 0h1m9 0h1m9 0h1m9 0h1m10 0h1m9 0h1m9 0h1m9 0h1m10 0h1m9 0h1m9 0h1m9 0h1m10 0h1m9 0h1m9 0h1m9 0h1m10 0h1m9 0h1m9 0h1m9 0h1m10 0h1m9 0h1m9 0h1m9 0h1m10 0h1m9 0h1m9 0h1m9 0h1m10 0h1m9 0h1m9 0h1m9 0h1m10 0h1m9 0h1m9 0h1m9 0h1m10 0h1m9 0h1m9 0h1m9 0h1m10 0h1m9 0h1m9 0h1m9 0h1m10 0h1m9 0h1m9 0h1m9 0h1m10 0h1m9 0h1m9 0h1m9 0h1m10 0h1m9 0h1m9 0h1m9 0h1m10 0h1m9 0h1m9 0h1m9 0h1m10 0h1m9 0h1m9 0h1m9 0h1m10 0h1m9 0h1m9 0h1m9 0h1m10 0h1m9 0h1m9 0h1m9 0h1m10 0h1m9 0h1m9 0h1M95 342.5h1m9 0h1m10 0h1m9 0h1m9 0h1m9 0h1m10 0h1m9 0h1m9 0h1m9 0h1m10 0h1m9 0h1m9 0h1m9 0h1m10 0h1m9 0h1m9 0h1m9 0h1m10 0h1m9 0h1m9 0h1m9 0h1m10 0h1m9 0h1m9 0h1m9 0h1m10 0h1m9 0h1m9 0h1m9 0h1m9 0h1m10 0h1m9 0h1m9 0h1m9 0h1m10 0h1m9 0h1m9 0h1m9 0h1m10 0h1m9 0h1m9 0h1m9 0h1m10 0h1m9 0h1m9 0h1m9 0h1m10 0h1m9 0h1m9 0h1m9 0h1m10 0h1m9 0h1m9 0h1m9 0h1m10 0h1m9 0h1m9 0h1m9 0h1m10 0h1m9 0h1m9 0h1m9 0h1m10 0h1m9 0h1m9 0h1m9 0h1m10 0h1m9 0h1m9 0h1m9 0h1m10 0h1m9 0h1m9 0h1m9 0h1m10 0h1m9 0h1m9 0h1m9 0h1m10 0h1m9 0h1m9 0h1m9 0h1m10 0h1m9 0h1m9 0h1m9 0h1m10 0h1m9 0h1m9 0h1m9 0h1m10 0h1m9 0h1m9 0h1m9 0h1m10 0h1m9 0h1m9 0h1m9 0h1m10 0h1m9 0h1m9 0h1M95 332.5h1m9 0h1m10 0h1m9 0h1m9 0h1m9 0h1m10 0h1m9 0h1m9 0h1m9 0h1m10 0h1m9 0h1m9 0h1m9 0h1m10 0h1m9 0h1m9 0h1m9 0h1m10 0h1m9 0h1m9 0h1m9 0h1m10 0h1m9 0h1m9 0h1m9 0h1m10 0h1m9 0h1m9 0h1m9 0h1m9 0h1m10 0h1m9 0h1m9 0h1m9 0h1m10 0h1m9 0h1m9 0h1m9 0h1m10 0h1m9 0h1m9 0h1m9 0h1m10 0h1m9 0h1m9 0h1m9 0h1m10 0h1m9 0h1m9 0h1m9 0h1m10 0h1m9 0h1m9 0h1m9 0h1m10 0h1m9 0h1m9 0h1m9 0h1m10 0h1m9 0h1m9 0h1m9 0h1m10 0h1m9 0h1m9 0h1m9 0h1m10 0h1m9 0h1m9 0h1m9 0h1m10 0h1m9 0h1m9 0h1m9 0h1m10 0h1m9 0h1m9 0h1m9 0h1m10 0h1m9 0h1m9 0h1m9 0h1m10 0h1m9 0h1m9 0h1m9 0h1m10 0h1m9 0h1m9 0h1m9 0h1m10 0h1m9 0h1m9 0h1m9 0h1m10 0h1m9 0h1m9 0h1m9 0h1m10 0h1m9 0h1m9 0h1M95 322.5h1m9 0h1m10 0h1m9 0h1m9 0h1m9 0h1m10 0h1m9 0h1m9 0h1m9 0h1m10 0h1m9 0h1m9 0h1m9 0h1m10 0h1m9 0h1m9 0h1m9 0h1m10 0h1m9 0h1m9 0h1m9 0h1m10 0h1m9 0h1m9 0h1m9 0h1m10 0h1m9 0h1m9 0h1m9 0h1m9 0h1m10 0h1m9 0h1m9 0h1m9 0h1m10 0h1m9 0h1m9 0h1m9 0h1m10 0h1m9 0h1m9 0h1m9 0h1m10 0h1m9 0h1m9 0h1m9 0h1m10 0h1m9 0h1m9 0h1m9 0h1m10 0h1m9 0h1m9 0h1m9 0h1m10 0h1m9 0h1m9 0h1m9 0h1m10 0h1m9 0h1m9 0h1m9 0h1m10 0h1m9 0h1m9 0h1m9 0h1m10 0h1m9 0h1m9 0h1m9 0h1m10 0h1m9 0h1m9 0h1m9 0h1m10 0h1m9 0h1m9 0h1m9 0h1m10 0h1m9 0h1m9 0h1m9 0h1m10 0h1m9 0h1m9 0h1m9 0h1m10 0h1m9 0h1m9 0h1m9 0h1m10 0h1m9 0h1m9 0h1m9 0h1m10 0h1m9 0h1m9 0h1m9 0h1m10 0h1m9 0h1m9 0h1M95 312.5h1m9 0h1m10 0h1m9 0h1m9 0h1m9 0h1m10 0h1m9 0h1m9 0h1m9 0h1m10 0h1m9 0h1m9 0h1m9 0h1m10 0h1m9 0h1m9 0h1m9 0h1m10 0h1m9 0h1m9 0h1m9 0h1m10 0h1m9 0h1m9 0h1m9 0h1m10 0h1m9 0h1m9 0h1m9 0h1m9 0h1m10 0h1m9 0h1m9 0h1m9 0h1m10 0h1m9 0h1m9 0h1m9 0h1m10 0h1m9 0h1m9 0h1m9 0h1m10 0h1m9 0h1m9 0h1m9 0h1m10 0h1m9 0h1m9 0h1m9 0h1m10 0h1m9 0h1m9 0h1m9 0h1m10 0h1m9 0h1m9 0h1m9 0h1m10 0h1m9 0h1m9 0h1m9 0h1m10 0h1m9 0h1m9 0h1m9 0h1m10 0h1m9 0h1m9 0h1m9 0h1m10 0h1m9 0h1m9 0h1m9 0h1m10 0h1m9 0h1m9 0h1m9 0h1m10 0h1m9 0h1m9 0h1m9 0h1m10 0h1m9 0h1m9 0h1m9 0h1m10 0h1m9 0h1m9 0h1m9 0h1m10 0h1m9 0h1m9 0h1m9 0h1m10 0h1m9 0h1m9 0h1m9 0h1m10 0h1m9 0h1m9 0h1M95 301.5h1m9 0h1m10 0h1m9 0h1m9 0h1m9 0h1m10 0h1m9 0h1m9 0h1m9 0h1m10 0h1m9 0h1m9 0h1m9 0h1m10 0h1m9 0h1m9 0h1m9 0h1m10 0h1m9 0h1m9 0h1m9 0h1m10 0h1m9 0h1m9 0h1m9 0h1m10 0h1m9 0h1m9 0h1m9 0h1m9 0h1m10 0h1m9 0h1m9 0h1m9 0h1m10 0h1m9 0h1m9 0h1m9 0h1m10 0h1m9 0h1m9 0h1m9 0h1m10 0h1m9 0h1m9 0h1m9 0h1m10 0h1m9 0h1m9 0h1m9 0h1m10 0h1m9 0h1m9 0h1m9 0h1m10 0h1m9 0h1m9 0h1m9 0h1m10 0h1m9 0h1m9 0h1m9 0h1m10 0h1m9 0h1m9 0h1m9 0h1m10 0h1m9 0h1m9 0h1m9 0h1m10 0h1m9 0h1m9 0h1m9 0h1m10 0h1m9 0h1m9 0h1m9 0h1m10 0h1m9 0h1m9 0h1m9 0h1m10 0h1m9 0h1m9 0h1m9 0h1m10 0h1m9 0h1m9 0h1m9 0h1m10 0h1m9 0h1m9 0h1m9 0h1m10 0h1m9 0h1m9 0h1m9 0h1m10 0h1m9 0h1m9 0h1M95 291.5h1m9 0h1m10 0h1m9 0h1m9 0h1m9 0h1m10 0h1m9 0h1m9 0h1m9 0h1m10 0h1m9 0h1m9 0h1m9 0h1m10 0h1m9 0h1m9 0h1m9 0h1m10 0h1m9 0h1m9 0h1m9 0h1m10 0h1m9 0h1m9 0h1m9 0h1m10 0h1m9 0h1m9 0h1m9 0h1m9 0h1m10 0h1m9 0h1m9 0h1m9 0h1m10 0h1m9 0h1m9 0h1m9 0h1m10 0h1m9 0h1m9 0h1m9 0h1m10 0h1m9 0h1m9 0h1m9 0h1m10 0h1m9 0h1m9 0h1m9 0h1m10 0h1m9 0h1m9 0h1m9 0h1m10 0h1m9 0h1m9 0h1m9 0h1m10 0h1m9 0h1m9 0h1m9 0h1m10 0h1m9 0h1m9 0h1m9 0h1m10 0h1m9 0h1m9 0h1m9 0h1m10 0h1m9 0h1m9 0h1m9 0h1m10 0h1m9 0h1m9 0h1m9 0h1m10 0h1m9 0h1m9 0h1m9 0h1m10 0h1m9 0h1m9 0h1m9 0h1m10 0h1m9 0h1m9 0h1m9 0h1m10 0h1m9 0h1m9 0h1m9 0h1m10 0h1m9 0h1m9 0h1m9 0h1m10 0h1m9 0h1m9 0h1M95 281.5h1m9 0h1m10 0h1m9 0h1m9 0h1m9 0h1m10 0h1m9 0h1m9 0h1m9 0h1m10 0h1m9 0h1m9 0h1m9 0h1m10 0h1m9 0h1m9 0h1m9 0h1m10 0h1m9 0h1m9 0h1m9 0h1m10 0h1m9 0h1m9 0h1m9 0h1m10 0h1m9 0h1m9 0h1m9 0h1m9 0h1m10 0h1m9 0h1m9 0h1m9 0h1m10 0h1m9 0h1m9 0h1m9 0h1m10 0h1m9 0h1m9 0h1m9 0h1m10 0h1m9 0h1m9 0h1m9 0h1m10 0h1m9 0h1m9 0h1m9 0h1m10 0h1m9 0h1m9 0h1m9 0h1m10 0h1m9 0h1m9 0h1m9 0h1m10 0h1m9 0h1m9 0h1m9 0h1m10 0h1m9 0h1m9 0h1m9 0h1m10 0h1m9 0h1m9 0h1m9 0h1m10 0h1m9 0h1m9 0h1m9 0h1m10 0h1m9 0h1m9 0h1m9 0h1m10 0h1m9 0h1m9 0h1m9 0h1m10 0h1m9 0h1m9 0h1m9 0h1m10 0h1m9 0h1m9 0h1m9 0h1m10 0h1m9 0h1m9 0h1m9 0h1m10 0h1m9 0h1m9 0h1m9 0h1m10 0h1m9 0h1m9 0h1M95 271.5h1m9 0h1m10 0h1m9 0h1m9 0h1m9 0h1m10 0h1m9 0h1m9 0h1m9 0h1m10 0h1m9 0h1m9 0h1m9 0h1m10 0h1m9 0h1m9 0h1m9 0h1m10 0h1m9 0h1m9 0h1m9 0h1m10 0h1m9 0h1m9 0h1m9 0h1m10 0h1m9 0h1m9 0h1m9 0h1m9 0h1m10 0h1m9 0h1m9 0h1m9 0h1m10 0h1m9 0h1m9 0h1m9 0h1m10 0h1m9 0h1m9 0h1m9 0h1m10 0h1m9 0h1m9 0h1m9 0h1m10 0h1m9 0h1m9 0h1m9 0h1m10 0h1m9 0h1m9 0h1m9 0h1m10 0h1m9 0h1m9 0h1m9 0h1m10 0h1m9 0h1m9 0h1m9 0h1m10 0h1m9 0h1m9 0h1m9 0h1m10 0h1m9 0h1m9 0h1m9 0h1m10 0h1m9 0h1m9 0h1m9 0h1m10 0h1m9 0h1m9 0h1m9 0h1m10 0h1m9 0h1m9 0h1m9 0h1m10 0h1m9 0h1m9 0h1m9 0h1m10 0h1m9 0h1m9 0h1m9 0h1m10 0h1m9 0h1m9 0h1m9 0h1m10 0h1m9 0h1m9 0h1m9 0h1m10 0h1m9 0h1m9 0h1M95 260.5h1m9 0h1m10 0h1m9 0h1m9 0h1m9 0h1m10 0h1m9 0h1m9 0h1m9 0h1m10 0h1m9 0h1m9 0h1m9 0h1m10 0h1m9 0h1m9 0h1m9 0h1m10 0h1m9 0h1m9 0h1m9 0h1m10 0h1m9 0h1m9 0h1m9 0h1m10 0h1m9 0h1m9 0h1m9 0h1m9 0h1m10 0h1m9 0h1m9 0h1m9 0h1m10 0h1m9 0h1m9 0h1m9 0h1m10 0h1m9 0h1m9 0h1m9 0h1m10 0h1m9 0h1m9 0h1m9 0h1m10 0h1m9 0h1m9 0h1m9 0h1m10 0h1m9 0h1m9 0h1m9 0h1m10 0h1m9 0h1m9 0h1m9 0h1m10 0h1m9 0h1m9 0h1m9 0h1m10 0h1m9 0h1m9 0h1m9 0h1m10 0h1m9 0h1m9 0h1m9 0h1m10 0h1m9 0h1m9 0h1m9 0h1m10 0h1m9 0h1m9 0h1m9 0h1m10 0h1m9 0h1m9 0h1m9 0h1m10 0h1m9 0h1m9 0h1m9 0h1m10 0h1m9 0h1m9 0h1m9 0h1m10 0h1m9 0h1m9 0h1m9 0h1m10 0h1m9 0h1m9 0h1m9 0h1m10 0h1m9 0h1m9 0h1M95 250.5h1m9 0h1m10 0h1m9 0h1m9 0h1m9 0h1m10 0h1m9 0h1m9 0h1m9 0h1m10 0h1m9 0h1m9 0h1m9 0h1m10 0h1m9 0h1m9 0h1m9 0h1m10 0h1m9 0h1m9 0h1m9 0h1m10 0h1m9 0h1m9 0h1m9 0h1m10 0h1m9 0h1m9 0h1m9 0h1m9 0h1m10 0h1m9 0h1m9 0h1m9 0h1m10 0h1m9 0h1m9 0h1m9 0h1m10 0h1m9 0h1m9 0h1m9 0h1m10 0h1m9 0h1m9 0h1m9 0h1m10 0h1m9 0h1m9 0h1m9 0h1m10 0h1m9 0h1m9 0h1m9 0h1m10 0h1m9 0h1m9 0h1m9 0h1m10 0h1m9 0h1m9 0h1m9 0h1m10 0h1m9 0h1m9 0h1m9 0h1m10 0h1m9 0h1m9 0h1m9 0h1m10 0h1m9 0h1m9 0h1m9 0h1m10 0h1m9 0h1m9 0h1m9 0h1m10 0h1m9 0h1m9 0h1m9 0h1m10 0h1m9 0h1m9 0h1m9 0h1m10 0h1m9 0h1m9 0h1m9 0h1m10 0h1m9 0h1m9 0h1m9 0h1m10 0h1m9 0h1m9 0h1m9 0h1m10 0h1m9 0h1m9 0h1M95 240.5h1m9 0h1m10 0h1m9 0h1m9 0h1m9 0h1m10 0h1m9 0h1m9 0h1m9 0h1m10 0h1m9 0h1m9 0h1m9 0h1m10 0h1m9 0h1m9 0h1m9 0h1m10 0h1m9 0h1m9 0h1m9 0h1m10 0h1m9 0h1m9 0h1m9 0h1m10 0h1m9 0h1m9 0h1m9 0h1m9 0h1m10 0h1m9 0h1m9 0h1m9 0h1m10 0h1m9 0h1m9 0h1m9 0h1m10 0h1m9 0h1m9 0h1m9 0h1m10 0h1m9 0h1m9 0h1m9 0h1m10 0h1m9 0h1m9 0h1m9 0h1m10 0h1m9 0h1m9 0h1m9 0h1m10 0h1m9 0h1m9 0h1m9 0h1m10 0h1m9 0h1m9 0h1m9 0h1m10 0h1m9 0h1m9 0h1m9 0h1m10 0h1m9 0h1m9 0h1m9 0h1m10 0h1m9 0h1m9 0h1m9 0h1m10 0h1m9 0h1m9 0h1m9 0h1m10 0h1m9 0h1m9 0h1m9 0h1m10 0h1m9 0h1m9 0h1m9 0h1m10 0h1m9 0h1m9 0h1m9 0h1m10 0h1m9 0h1m9 0h1m9 0h1m10 0h1m9 0h1m9 0h1m9 0h1m10 0h1m9 0h1m9 0h1M95 230.5h1m9 0h1m10 0h1m9 0h1m9 0h1m9 0h1m10 0h1m9 0h1m9 0h1m9 0h1m10 0h1m9 0h1m9 0h1m9 0h1m10 0h1m9 0h1m9 0h1m9 0h1m10 0h1m9 0h1m9 0h1m9 0h1m10 0h1m9 0h1m9 0h1m9 0h1m10 0h1m9 0h1m9 0h1m9 0h1m9 0h1m10 0h1m9 0h1m9 0h1m9 0h1m10 0h1m9 0h1m9 0h1m9 0h1m10 0h1m9 0h1m9 0h1m9 0h1m10 0h1m9 0h1m9 0h1m9 0h1m10 0h1m9 0h1m9 0h1m9 0h1m10 0h1m9 0h1m9 0h1m9 0h1m10 0h1m9 0h1m9 0h1m9 0h1m10 0h1m9 0h1m9 0h1m9 0h1m10 0h1m9 0h1m9 0h1m9 0h1m10 0h1m9 0h1m9 0h1m9 0h1m10 0h1m9 0h1m9 0h1m9 0h1m10 0h1m9 0h1m9 0h1m9 0h1m10 0h1m9 0h1m9 0h1m9 0h1m10 0h1m9 0h1m9 0h1m9 0h1m10 0h1m9 0h1m9 0h1m9 0h1m10 0h1m9 0h1m9 0h1m9 0h1m10 0h1m9 0h1m9 0h1m9 0h1m10 0h1m9 0h1m9 0h1M95 219.5h1m9 0h1m10 0h1m9 0h1m9 0h1m9 0h1m10 0h1m9 0h1m9 0h1m9 0h1m10 0h1m9 0h1m9 0h1m9 0h1m10 0h1m9 0h1m9 0h1m9 0h1m10 0h1m9 0h1m9 0h1m9 0h1m10 0h1m9 0h1m9 0h1m9 0h1m10 0h1m9 0h1m9 0h1m9 0h1m9 0h1m10 0h1m9 0h1m9 0h1m9 0h1m10 0h1m9 0h1m9 0h1m9 0h1m10 0h1m9 0h1m9 0h1m9 0h1m10 0h1m9 0h1m9 0h1m9 0h1m10 0h1m9 0h1m9 0h1m9 0h1m10 0h1m9 0h1m9 0h1m9 0h1m10 0h1m9 0h1m9 0h1m9 0h1m10 0h1m9 0h1m9 0h1m9 0h1m10 0h1m9 0h1m9 0h1m9 0h1m10 0h1m9 0h1m9 0h1m9 0h1m10 0h1m9 0h1m9 0h1m9 0h1m10 0h1m9 0h1m9 0h1m9 0h1m10 0h1m9 0h1m9 0h1m9 0h1m10 0h1m9 0h1m9 0h1m9 0h1m10 0h1m9 0h1m9 0h1m9 0h1m10 0h1m9 0h1m9 0h1m9 0h1m10 0h1m9 0h1m9 0h1m9 0h1m10 0h1m9 0h1m9 0h1M95 209.5h1m9 0h1m10 0h1m9 0h1m9 0h1m9 0h1m10 0h1m9 0h1m9 0h1m9 0h1m10 0h1m9 0h1m9 0h1m9 0h1m10 0h1m9 0h1m9 0h1m9 0h1m10 0h1m9 0h1m9 0h1m9 0h1m10 0h1m9 0h1m9 0h1m9 0h1m10 0h1m9 0h1m9 0h1m9 0h1m9 0h1m10 0h1m9 0h1m9 0h1m9 0h1m10 0h1m9 0h1m9 0h1m9 0h1m10 0h1m9 0h1m9 0h1m9 0h1m10 0h1m9 0h1m9 0h1m9 0h1m10 0h1m9 0h1m9 0h1m9 0h1m10 0h1m9 0h1m9 0h1m9 0h1m10 0h1m9 0h1m9 0h1m9 0h1m10 0h1m9 0h1m9 0h1m9 0h1m10 0h1m9 0h1m9 0h1m9 0h1m10 0h1m9 0h1m9 0h1m9 0h1m10 0h1m9 0h1m9 0h1m9 0h1m10 0h1m9 0h1m9 0h1m9 0h1m10 0h1m9 0h1m9 0h1m9 0h1m10 0h1m9 0h1m9 0h1m9 0h1m10 0h1m9 0h1m9 0h1m9 0h1m10 0h1m9 0h1m9 0h1m9 0h1m10 0h1m9 0h1m9 0h1m9 0h1m10 0h1m9 0h1m9 0h1M95 199.5h1m9 0h1m10 0h1m9 0h1m9 0h1m9 0h1m10 0h1m9 0h1m9 0h1m9 0h1m10 0h1m9 0h1m9 0h1m9 0h1m10 0h1m9 0h1m9 0h1m9 0h1m10 0h1m9 0h1m9 0h1m9 0h1m10 0h1m9 0h1m9 0h1m9 0h1m10 0h1m9 0h1m9 0h1m9 0h1m9 0h1m10 0h1m9 0h1m9 0h1m9 0h1m10 0h1m9 0h1m9 0h1m9 0h1m10 0h1m9 0h1m9 0h1m9 0h1m10 0h1m9 0h1m9 0h1m9 0h1m10 0h1m9 0h1m9 0h1m9 0h1m10 0h1m9 0h1m9 0h1m9 0h1m10 0h1m9 0h1m9 0h1m9 0h1m10 0h1m9 0h1m9 0h1m9 0h1m10 0h1m9 0h1m9 0h1m9 0h1m10 0h1m9 0h1m9 0h1m9 0h1m10 0h1m9 0h1m9 0h1m9 0h1m10 0h1m9 0h1m9 0h1m9 0h1m10 0h1m9 0h1m9 0h1m9 0h1m10 0h1m9 0h1m9 0h1m9 0h1m10 0h1m9 0h1m9 0h1m9 0h1m10 0h1m9 0h1m9 0h1m9 0h1m10 0h1m9 0h1m9 0h1m9 0h1m10 0h1m9 0h1m9 0h1M95 189.5h1m9 0h1m10 0h1m9 0h1m9 0h1m9 0h1m10 0h1m9 0h1m9 0h1m9 0h1m10 0h1m9 0h1m9 0h1m9 0h1m10 0h1m9 0h1m9 0h1m9 0h1m10 0h1m9 0h1m9 0h1m9 0h1m10 0h1m9 0h1m9 0h1m9 0h1m10 0h1m9 0h1m9 0h1m9 0h1m9 0h1m10 0h1m9 0h1m9 0h1m9 0h1m10 0h1m9 0h1m9 0h1m9 0h1m10 0h1m9 0h1m9 0h1m9 0h1m10 0h1m9 0h1m9 0h1m9 0h1m10 0h1m9 0h1m9 0h1m9 0h1m10 0h1m9 0h1m9 0h1m9 0h1m10 0h1m9 0h1m9 0h1m9 0h1m10 0h1m9 0h1m9 0h1m9 0h1m10 0h1m9 0h1m9 0h1m9 0h1m10 0h1m9 0h1m9 0h1m9 0h1m10 0h1m9 0h1m9 0h1m9 0h1m10 0h1m9 0h1m9 0h1m9 0h1m10 0h1m9 0h1m9 0h1m9 0h1m10 0h1m9 0h1m9 0h1m9 0h1m10 0h1m9 0h1m9 0h1m9 0h1m10 0h1m9 0h1m9 0h1m9 0h1m10 0h1m9 0h1m9 0h1m9 0h1m10 0h1m9 0h1m9 0h1M95 178.5h1m9 0h1m10 0h1m9 0h1m9 0h1m9 0h1m10 0h1m9 0h1m9 0h1m9 0h1m10 0h1m9 0h1m9 0h1m9 0h1m10 0h1m9 0h1m9 0h1m9 0h1m10 0h1m9 0h1m9 0h1m9 0h1m10 0h1m9 0h1m9 0h1m9 0h1m10 0h1m9 0h1m9 0h1m9 0h1m9 0h1m10 0h1m9 0h1m9 0h1m9 0h1m10 0h1m9 0h1m9 0h1m9 0h1m10 0h1m9 0h1m9 0h1m9 0h1m10 0h1m9 0h1m9 0h1m9 0h1m10 0h1m9 0h1m9 0h1m9 0h1m10 0h1m9 0h1m9 0h1m9 0h1m10 0h1m9 0h1m9 0h1m9 0h1m10 0h1m9 0h1m9 0h1m9 0h1m10 0h1m9 0h1m9 0h1m9 0h1m10 0h1m9 0h1m9 0h1m9 0h1m10 0h1m9 0h1m9 0h1m9 0h1m10 0h1m9 0h1m9 0h1m9 0h1m10 0h1m9 0h1m9 0h1m9 0h1m10 0h1m9 0h1m9 0h1m9 0h1m10 0h1m9 0h1m9 0h1m9 0h1m10 0h1m9 0h1m9 0h1m9 0h1m10 0h1m9 0h1m9 0h1m9 0h1m10 0h1m9 0h1m9 0h1M95 168.5h1m9 0h1m10 0h1m9 0h1m9 0h1m9 0h1m10 0h1m9 0h1m9 0h1m9 0h1m10 0h1m9 0h1m9 0h1m9 0h1m10 0h1m9 0h1m9 0h1m9 0h1m10 0h1m9 0h1m9 0h1m9 0h1m10 0h1m9 0h1m9 0h1m9 0h1m10 0h1m9 0h1m9 0h1m9 0h1m9 0h1m10 0h1m9 0h1m9 0h1m9 0h1m10 0h1m9 0h1m9 0h1m9 0h1m10 0h1m9 0h1m9 0h1m9 0h1m10 0h1m9 0h1m9 0h1m9 0h1m10 0h1m9 0h1m9 0h1m9 0h1m10 0h1m9 0h1m9 0h1m9 0h1m10 0h1m9 0h1m9 0h1m9 0h1m10 0h1m9 0h1m9 0h1m9 0h1m10 0h1m9 0h1m9 0h1m9 0h1m10 0h1m9 0h1m9 0h1m9 0h1m10 0h1m9 0h1m9 0h1m9 0h1m10 0h1m9 0h1m9 0h1m9 0h1m10 0h1m9 0h1m9 0h1m9 0h1m10 0h1m9 0h1m9 0h1m9 0h1m10 0h1m9 0h1m9 0h1m9 0h1m10 0h1m9 0h1m9 0h1m9 0h1m10 0h1m9 0h1m9 0h1m9 0h1m10 0h1m9 0h1m9 0h1M95 158.5h1m9 0h1m10 0h1m9 0h1m9 0h1m9 0h1m10 0h1m9 0h1m9 0h1m9 0h1m10 0h1m9 0h1m9 0h1m9 0h1m10 0h1m9 0h1m9 0h1m9 0h1m10 0h1m9 0h1m9 0h1m9 0h1m10 0h1m9 0h1m9 0h1m9 0h1m10 0h1m9 0h1m9 0h1m9 0h1m9 0h1m10 0h1m9 0h1m9 0h1m9 0h1m10 0h1m9 0h1m9 0h1m9 0h1m10 0h1m9 0h1m9 0h1m9 0h1m10 0h1m9 0h1m9 0h1m9 0h1m10 0h1m9 0h1m9 0h1m9 0h1m10 0h1m9 0h1m9 0h1m9 0h1m10 0h1m9 0h1m9 0h1m9 0h1m10 0h1m9 0h1m9 0h1m9 0h1m10 0h1m9 0h1m9 0h1m9 0h1m10 0h1m9 0h1m9 0h1m9 0h1m10 0h1m9 0h1m9 0h1m9 0h1m10 0h1m9 0h1m9 0h1m9 0h1m10 0h1m9 0h1m9 0h1m9 0h1m10 0h1m9 0h1m9 0h1m9 0h1m10 0h1m9 0h1m9 0h1m9 0h1m10 0h1m9 0h1m9 0h1m9 0h1m10 0h1m9 0h1m9 0h1m9 0h1m10 0h1m9 0h1m9 0h1"/>
<g stroke="#c40000" stroke-width="1" fill="none"><path d="M126 629.5H166M146.5 609V650"/><circle cx="146.5" cy="629.5" r="5.2"/></g>
<path fill="none" stroke="#bdbdbd" stroke-width="1.6" stroke-dasharray="9 3.5 1.5 3.5" d="M233.41 326.98H356.38A35.87 35.87 0 0 1 356.38 398.72H233.41A35.87 35.87 0 0 1 233.41 326.98Z"/>
<line x1="186.9" y1="362.9" x2="403.2" y2="362.9" stroke="#e00000" stroke-width="1.8" stroke-dasharray="17 6.5 2 6.5" stroke-dashoffset="12.35"/>
<line x1="294.9" y1="311.1" x2="294.9" y2="414.8" stroke="#e00000" stroke-width="1.8" stroke-dasharray="17 6.5 2 6.5" stroke-dashoffset="4.65"/>
<circle cx="233.41" cy="362.85" r="7.6" fill="none" stroke="#fff" stroke-width="2.8"/>
<circle cx="356.38" cy="362.85" r="7.6" fill="none" stroke="#fff" stroke-width="2.8"/>
<line x1="417" y1="362.9" x2="525.9" y2="362.9" stroke="#e00000" stroke-width="1.8" stroke-dasharray="17 6.5 2 6.5" stroke-dashoffset="2.05"/>
<line x1="469" y1="311.1" x2="469" y2="414.8" stroke="#e00000" stroke-width="1.8" stroke-dasharray="17 6.5 2 6.5" stroke-dashoffset="4.65"/>
<circle cx="469.11" cy="362.85" r="38.2" fill="none" stroke="#fff" stroke-width="2.8"/>
<line x1="545.5" y1="362.9" x2="607.7" y2="362.9" stroke="#e00000" stroke-width="1.8" stroke-dasharray="17 6.5 2 6.5" stroke-dashoffset="9.4"/>
<line x1="576.6" y1="331.5" x2="576.6" y2="394.5" stroke="#e00000" stroke-width="1.8" stroke-dasharray="17 6.5 2 6.5" stroke-dashoffset="9"/>
<circle cx="576.72" cy="362.85" r="17.3" fill="none" stroke="#fff" stroke-width="2.8"/>
<path fill="none" stroke="#bdbdbd" stroke-width="1.6" stroke-dasharray="9 3.5 1.5 3.5" d="M249.29 472.51H494.22A54.31 54.31 0 0 1 494.22 581.13H249.29A54.31 54.31 0 0 1 249.29 472.51Z"/>
<line x1="176.7" y1="526.9" x2="566.9" y2="526.9" stroke="#e00000" stroke-width="1.8" stroke-dasharray="17 6.5 2 6.5" stroke-dashoffset="5.4"/>
<line x1="371.7" y1="454.8" x2="371.7" y2="599" stroke="#e00000" stroke-width="1.8" stroke-dasharray="17 6.5 2 6.5" stroke-dashoffset="0.4"/>
<circle cx="233.41" cy="526.82" r="15.6" fill="none" stroke="#fff" stroke-width="2.8"/>
<circle cx="509.08" cy="526.82" r="15.6" fill="none" stroke="#fff" stroke-width="2.8"/>
<circle cx="668.95" cy="332.11" r="6.6" fill="none" stroke="#fff" stroke-width="2.3"/>
<circle cx="699.69" cy="332.11" r="6.6" fill="none" stroke="#fff" stroke-width="2.3"/>
<circle cx="730.44" cy="332.11" r="6.6" fill="none" stroke="#fff" stroke-width="2.3"/>
<circle cx="761.18" cy="332.11" r="6.6" fill="none" stroke="#fff" stroke-width="2.3"/>
<circle cx="791.92" cy="332.11" r="6.6" fill="none" stroke="#fff" stroke-width="2.3"/>
<circle cx="822.67" cy="332.11" r="6.6" fill="none" stroke="#fff" stroke-width="2.3"/>
<circle cx="853.41" cy="332.11" r="6.6" fill="none" stroke="#fff" stroke-width="2.3"/>
<circle cx="884.16" cy="332.11" r="6.6" fill="none" stroke="#fff" stroke-width="2.3"/>
<circle cx="914.9" cy="332.11" r="6.6" fill="none" stroke="#fff" stroke-width="2.3"/>
<circle cx="945.64" cy="332.11" r="6.6" fill="none" stroke="#fff" stroke-width="2.3"/>
<circle cx="976.39" cy="332.11" r="6.6" fill="none" stroke="#fff" stroke-width="2.3"/>
<circle cx="1007.13" cy="332.11" r="6.6" fill="none" stroke="#fff" stroke-width="2.3"/>
<circle cx="684.32" cy="352.6" r="6.6" fill="none" stroke="#fff" stroke-width="2.3"/>
<circle cx="715.06" cy="352.6" r="6.6" fill="none" stroke="#fff" stroke-width="2.3"/>
<circle cx="745.81" cy="352.6" r="6.6" fill="none" stroke="#fff" stroke-width="2.3"/>
<circle cx="776.55" cy="352.6" r="6.6" fill="none" stroke="#fff" stroke-width="2.3"/>
<circle cx="807.3" cy="352.6" r="6.6" fill="none" stroke="#fff" stroke-width="2.3"/>
<circle cx="838.04" cy="352.6" r="6.6" fill="none" stroke="#fff" stroke-width="2.3"/>
<circle cx="868.78" cy="352.6" r="6.6" fill="none" stroke="#fff" stroke-width="2.3"/>
<circle cx="899.53" cy="352.6" r="6.6" fill="none" stroke="#fff" stroke-width="2.3"/>
<circle cx="930.27" cy="352.6" r="6.6" fill="none" stroke="#fff" stroke-width="2.3"/>
<circle cx="961.02" cy="352.6" r="6.6" fill="none" stroke="#fff" stroke-width="2.3"/>
<circle cx="991.76" cy="352.6" r="6.6" fill="none" stroke="#fff" stroke-width="2.3"/>
<circle cx="668.95" cy="373.1" r="6.6" fill="none" stroke="#fff" stroke-width="2.3"/>
<circle cx="699.69" cy="373.1" r="6.6" fill="none" stroke="#fff" stroke-width="2.3"/>
<circle cx="730.44" cy="373.1" r="6.6" fill="none" stroke="#fff" stroke-width="2.3"/>
<circle cx="761.18" cy="373.1" r="6.6" fill="none" stroke="#fff" stroke-width="2.3"/>
<circle cx="791.92" cy="373.1" r="6.6" fill="none" stroke="#fff" stroke-width="2.3"/>
<circle cx="822.67" cy="373.1" r="6.6" fill="none" stroke="#fff" stroke-width="2.3"/>
<circle cx="853.41" cy="373.1" r="6.6" fill="none" stroke="#fff" stroke-width="2.3"/>
<circle cx="884.16" cy="373.1" r="6.6" fill="none" stroke="#fff" stroke-width="2.3"/>
<circle cx="914.9" cy="373.1" r="6.6" fill="none" stroke="#fff" stroke-width="2.3"/>
<circle cx="945.64" cy="373.1" r="6.6" fill="none" stroke="#fff" stroke-width="2.3"/>
<circle cx="976.39" cy="373.1" r="6.6" fill="none" stroke="#fff" stroke-width="2.3"/>
<circle cx="1007.13" cy="373.1" r="6.6" fill="none" stroke="#fff" stroke-width="2.3"/>
<circle cx="684.32" cy="393.6" r="6.6" fill="none" stroke="#fff" stroke-width="2.3"/>
<circle cx="715.06" cy="393.6" r="6.6" fill="none" stroke="#fff" stroke-width="2.3"/>
<circle cx="745.81" cy="393.6" r="6.6" fill="none" stroke="#fff" stroke-width="2.3"/>
<circle cx="776.55" cy="393.6" r="6.6" fill="none" stroke="#fff" stroke-width="2.3"/>
<circle cx="807.3" cy="393.6" r="6.6" fill="none" stroke="#fff" stroke-width="2.3"/>
<circle cx="838.04" cy="393.6" r="6.6" fill="none" stroke="#fff" stroke-width="2.3"/>
<circle cx="868.78" cy="393.6" r="6.6" fill="none" stroke="#fff" stroke-width="2.3"/>
<circle cx="899.53" cy="393.6" r="6.6" fill="none" stroke="#fff" stroke-width="2.3"/>
<circle cx="930.27" cy="393.6" r="6.6" fill="none" stroke="#fff" stroke-width="2.3"/>
<circle cx="961.02" cy="393.6" r="6.6" fill="none" stroke="#fff" stroke-width="2.3"/>
<circle cx="991.76" cy="393.6" r="6.6" fill="none" stroke="#fff" stroke-width="2.3"/>
<circle cx="668.95" cy="414.09" r="6.6" fill="none" stroke="#fff" stroke-width="2.3"/>
<circle cx="699.69" cy="414.09" r="6.6" fill="none" stroke="#fff" stroke-width="2.3"/>
<circle cx="730.44" cy="414.09" r="6.6" fill="none" stroke="#fff" stroke-width="2.3"/>
<circle cx="761.18" cy="414.09" r="6.6" fill="none" stroke="#fff" stroke-width="2.3"/>
<circle cx="791.92" cy="414.09" r="6.6" fill="none" stroke="#fff" stroke-width="2.3"/>
<circle cx="822.67" cy="414.09" r="6.6" fill="none" stroke="#fff" stroke-width="2.3"/>
<circle cx="853.41" cy="414.09" r="6.6" fill="none" stroke="#fff" stroke-width="2.3"/>
<circle cx="884.16" cy="414.09" r="6.6" fill="none" stroke="#fff" stroke-width="2.3"/>
<circle cx="914.9" cy="414.09" r="6.6" fill="none" stroke="#fff" stroke-width="2.3"/>
<circle cx="945.64" cy="414.09" r="6.6" fill="none" stroke="#fff" stroke-width="2.3"/>
<circle cx="976.39" cy="414.09" r="6.6" fill="none" stroke="#fff" stroke-width="2.3"/>
<circle cx="1007.13" cy="414.09" r="6.6" fill="none" stroke="#fff" stroke-width="2.3"/>
<circle cx="684.32" cy="434.59" r="6.6" fill="none" stroke="#fff" stroke-width="2.3"/>
<circle cx="715.06" cy="434.59" r="6.6" fill="none" stroke="#fff" stroke-width="2.3"/>
<circle cx="745.81" cy="434.59" r="6.6" fill="none" stroke="#fff" stroke-width="2.3"/>
<circle cx="776.55" cy="434.59" r="6.6" fill="none" stroke="#fff" stroke-width="2.3"/>
<circle cx="807.3" cy="434.59" r="6.6" fill="none" stroke="#fff" stroke-width="2.3"/>
<circle cx="838.04" cy="434.59" r="6.6" fill="none" stroke="#fff" stroke-width="2.3"/>
<circle cx="868.78" cy="434.59" r="6.6" fill="none" stroke="#fff" stroke-width="2.3"/>
<circle cx="899.53" cy="434.59" r="6.6" fill="none" stroke="#fff" stroke-width="2.3"/>
<circle cx="930.27" cy="434.59" r="6.6" fill="none" stroke="#fff" stroke-width="2.3"/>
<circle cx="961.02" cy="434.59" r="6.6" fill="none" stroke="#fff" stroke-width="2.3"/>
<circle cx="991.76" cy="434.59" r="6.6" fill="none" stroke="#fff" stroke-width="2.3"/>
<circle cx="668.95" cy="455.08" r="6.6" fill="none" stroke="#fff" stroke-width="2.3"/>
<circle cx="699.69" cy="455.08" r="6.6" fill="none" stroke="#fff" stroke-width="2.3"/>
<circle cx="730.44" cy="455.08" r="6.6" fill="none" stroke="#fff" stroke-width="2.3"/>
<circle cx="761.18" cy="455.08" r="6.6" fill="none" stroke="#fff" stroke-width="2.3"/>
<circle cx="791.92" cy="455.08" r="6.6" fill="none" stroke="#fff" stroke-width="2.3"/>
<circle cx="822.67" cy="455.08" r="6.6" fill="none" stroke="#fff" stroke-width="2.3"/>
<circle cx="684.32" cy="475.58" r="6.6" fill="none" stroke="#fff" stroke-width="2.3"/>
<circle cx="715.06" cy="475.58" r="6.6" fill="none" stroke="#fff" stroke-width="2.3"/>
<circle cx="745.81" cy="475.58" r="6.6" fill="none" stroke="#fff" stroke-width="2.3"/>
<circle cx="776.55" cy="475.58" r="6.6" fill="none" stroke="#fff" stroke-width="2.3"/>
<circle cx="807.3" cy="475.58" r="6.6" fill="none" stroke="#fff" stroke-width="2.3"/>
<circle cx="668.95" cy="496.08" r="6.6" fill="none" stroke="#fff" stroke-width="2.3"/>
<circle cx="699.69" cy="496.08" r="6.6" fill="none" stroke="#fff" stroke-width="2.3"/>
<circle cx="730.44" cy="496.08" r="6.6" fill="none" stroke="#fff" stroke-width="2.3"/>
<circle cx="761.18" cy="496.08" r="6.6" fill="none" stroke="#fff" stroke-width="2.3"/>
<circle cx="791.92" cy="496.08" r="6.6" fill="none" stroke="#fff" stroke-width="2.3"/>
<circle cx="822.67" cy="496.08" r="6.6" fill="none" stroke="#fff" stroke-width="2.3"/>
<circle cx="684.32" cy="516.57" r="6.6" fill="none" stroke="#fff" stroke-width="2.3"/>
<circle cx="715.06" cy="516.57" r="6.6" fill="none" stroke="#fff" stroke-width="2.3"/>
<circle cx="745.81" cy="516.57" r="6.6" fill="none" stroke="#fff" stroke-width="2.3"/>
<circle cx="776.55" cy="516.57" r="6.6" fill="none" stroke="#fff" stroke-width="2.3"/>
<circle cx="807.3" cy="516.57" r="6.6" fill="none" stroke="#fff" stroke-width="2.3"/>
<circle cx="668.95" cy="537.07" r="6.6" fill="none" stroke="#fff" stroke-width="2.3"/>
<circle cx="699.69" cy="537.07" r="6.6" fill="none" stroke="#fff" stroke-width="2.3"/>
<circle cx="730.44" cy="537.07" r="6.6" fill="none" stroke="#fff" stroke-width="2.3"/>
<circle cx="761.18" cy="537.07" r="6.6" fill="none" stroke="#fff" stroke-width="2.3"/>
<circle cx="791.92" cy="537.07" r="6.6" fill="none" stroke="#fff" stroke-width="2.3"/>
<circle cx="822.67" cy="537.07" r="6.6" fill="none" stroke="#fff" stroke-width="2.3"/>
<circle cx="684.32" cy="557.56" r="6.6" fill="none" stroke="#fff" stroke-width="2.3"/>
<circle cx="715.06" cy="557.56" r="6.6" fill="none" stroke="#fff" stroke-width="2.3"/>
<circle cx="745.81" cy="557.56" r="6.6" fill="none" stroke="#fff" stroke-width="2.3"/>
<circle cx="776.55" cy="557.56" r="6.6" fill="none" stroke="#fff" stroke-width="2.3"/>
<circle cx="807.3" cy="557.56" r="6.6" fill="none" stroke="#fff" stroke-width="2.3"/>
<circle cx="668.95" cy="578.06" r="6.6" fill="none" stroke="#fff" stroke-width="2.3"/>
<circle cx="699.69" cy="578.06" r="6.6" fill="none" stroke="#fff" stroke-width="2.3"/>
<circle cx="730.44" cy="578.06" r="6.6" fill="none" stroke="#fff" stroke-width="2.3"/>
<circle cx="761.18" cy="578.06" r="6.6" fill="none" stroke="#fff" stroke-width="2.3"/>
<circle cx="791.92" cy="578.06" r="6.6" fill="none" stroke="#fff" stroke-width="2.3"/>
<circle cx="822.67" cy="578.06" r="6.6" fill="none" stroke="#fff" stroke-width="2.3"/>
<line x1="845.1" y1="521.6" x2="1030.9" y2="521.6" stroke="#e00000" stroke-width="1.8" stroke-dasharray="17 6.5 2 6.5" stroke-dashoffset="11.6"/>
<line x1="938.1" y1="445" x2="938.1" y2="591" stroke="#e00000" stroke-width="1.8" stroke-dasharray="17 6.5 2 6.5" stroke-dashoffset="15.5"/>
<path fill="none" stroke="#853a3a" stroke-width="2.6" d="M166.8 270.62H1048.12A20.5 20.5 0 0 1 1068.62 291.12V608.8A20.5 20.5 0 0 1 1048.12 629.3H166.8A20.5 20.5 0 0 1 146.3 608.8V291.12A20.5 20.5 0 0 1 166.8 270.62ZM879.03 465.33H996.88A20.5 20.5 0 0 1 1017.38 485.83V557.56A20.5 20.5 0 0 1 996.88 578.06H879.03A20.5 20.5 0 0 1 858.54 557.56V485.83A20.5 20.5 0 0 1 879.03 465.33ZM255.65 337.44L334.15 337.44A10.25 10.25 0 0 1 344.29 349.12L339.88 379.45A10.25 10.25 0 0 1 329.74 388.27L260.05 388.27A10.25 10.25 0 0 1 249.91 379.45L245.5 349.12A10.25 10.25 0 0 1 255.65 337.44ZM288.3 494.3H455.3V544.3H438.7L425.6 559.7H317.6L304.7 544.3H288.3Z"/>
<rect x="147.3" y="271.62" width="10" height="10" fill="#0085b0" stroke="#b8b8c8" stroke-width="0.8"/>
<rect x="161.8" y="265.62" width="10" height="10" fill="#0040b0" stroke="#b8b8c8" stroke-width="0.8"/>
<rect x="141.3" y="286.12" width="10" height="10" fill="#0040b0" stroke="#b8b8c8" stroke-width="0.8"/>
<circle cx="166.8" cy="291.12" r="4.9" fill="#0000b0" stroke="#9090d0" stroke-width="0.6"/>
<rect x="1057.62" y="271.62" width="10" height="10" fill="#0085b0" stroke="#b8b8c8" stroke-width="0.8"/>
<rect x="1043.12" y="265.62" width="10" height="10" fill="#0000bb" stroke="#b8b8c8" stroke-width="0.8"/>
<rect x="1063.62" y="286.12" width="10" height="10" fill="#c0001f" stroke="#b8b8c8" stroke-width="0.8"/>
<circle cx="1048.12" cy="291.12" r="4.9" fill="#0000b0" stroke="#9090d0" stroke-width="0.6"/>
<rect x="147.3" y="618.3" width="10" height="10" fill="#0085b0" stroke="#b8b8c8" stroke-width="0.8"/>
<rect x="141.3" y="603.8" width="10" height="10" fill="#c0001f" stroke="#b8b8c8" stroke-width="0.8"/>
<rect x="161.8" y="624.3" width="10" height="10" fill="#0040b0" stroke="#b8b8c8" stroke-width="0.8"/>
<circle cx="166.8" cy="608.8" r="4.9" fill="#0000b0" stroke="#9090d0" stroke-width="0.6"/>
<rect x="1057.62" y="618.3" width="10" height="10" fill="#0085b0" stroke="#b8b8c8" stroke-width="0.8"/>
<rect x="1043.12" y="624.3" width="10" height="10" fill="#c0001f" stroke="#b8b8c8" stroke-width="0.8"/>
<rect x="1063.62" y="603.8" width="10" height="10" fill="#0040b0" stroke="#b8b8c8" stroke-width="0.8"/>
<circle cx="1048.12" cy="608.8" r="4.9" fill="#0000b0" stroke="#9090d0" stroke-width="0.6"/>
<rect x="859.54" y="466.34" width="10" height="10" fill="#0085b0" stroke="#b8b8c8" stroke-width="0.8"/>
<rect x="874.03" y="460.33" width="10" height="10" fill="#0040b0" stroke="#b8b8c8" stroke-width="0.8"/>
<rect x="853.54" y="480.83" width="10" height="10" fill="#0040b0" stroke="#b8b8c8" stroke-width="0.8"/>
<circle cx="879.03" cy="485.83" r="4.9" fill="#0000b0" stroke="#9090d0" stroke-width="0.6"/>
<rect x="1006.38" y="466.34" width="10" height="10" fill="#0085b0" stroke="#b8b8c8" stroke-width="0.8"/>
<rect x="991.88" y="460.33" width="10" height="10" fill="#0040b0" stroke="#b8b8c8" stroke-width="0.8"/>
<rect x="1012.38" y="480.83" width="10" height="10" fill="#0040b0" stroke="#b8b8c8" stroke-width="0.8"/>
<circle cx="996.88" cy="485.83" r="4.9" fill="#0000b0" stroke="#9090d0" stroke-width="0.6"/>
<rect x="859.54" y="567.06" width="10" height="10" fill="#0085b0" stroke="#b8b8c8" stroke-width="0.8"/>
<rect x="853.54" y="552.56" width="10" height="10" fill="#0040b0" stroke="#b8b8c8" stroke-width="0.8"/>
<rect x="874.03" y="573.06" width="10" height="10" fill="#0040b0" stroke="#b8b8c8" stroke-width="0.8"/>
<circle cx="879.03" cy="557.56" r="4.9" fill="#0000b0" stroke="#9090d0" stroke-width="0.6"/>
<rect x="1006.38" y="567.06" width="10" height="10" fill="#0085b0" stroke="#b8b8c8" stroke-width="0.8"/>
<rect x="1012.38" y="552.56" width="10" height="10" fill="#0040b0" stroke="#b8b8c8" stroke-width="0.8"/>
<rect x="991.88" y="573.06" width="10" height="10" fill="#0040b0" stroke="#b8b8c8" stroke-width="0.8"/>
<circle cx="996.88" cy="557.56" r="4.9" fill="#0000b0" stroke="#9090d0" stroke-width="0.6"/>
<rect x="242.9" y="335.98" width="10" height="10" fill="#0085b0" stroke="#b8b8c8" stroke-width="0.8"/>
<rect x="250.65" y="332.44" width="10" height="10" fill="#0000bb" stroke="#b8b8c8" stroke-width="0.8"/>
<rect x="240.5" y="344.16" width="10" height="10" fill="#0000bb" stroke="#b8b8c8" stroke-width="0.8"/>
<circle cx="255.65" cy="347.68" r="4.9" fill="#0000b0" stroke="#9090d0" stroke-width="0.6"/>
<rect x="336.9" y="335.98" width="10" height="10" fill="#0085b0" stroke="#b8b8c8" stroke-width="0.8"/>
<rect x="329.15" y="332.44" width="10" height="10" fill="#c0001f" stroke="#b8b8c8" stroke-width="0.8"/>
<rect x="339.29" y="344.16" width="10" height="10" fill="#0000bb" stroke="#b8b8c8" stroke-width="0.8"/>
<circle cx="334.15" cy="347.68" r="4.9" fill="#0000b0" stroke="#9090d0" stroke-width="0.6"/>
<rect x="248.35" y="380.77" width="10" height="10" fill="#0085b0" stroke="#b8b8c8" stroke-width="0.8"/>
<rect x="244.91" y="374.49" width="10" height="10" fill="#c0001f" stroke="#b8b8c8" stroke-width="0.8"/>
<rect x="255.05" y="383.27" width="10" height="10" fill="#0000bb" stroke="#b8b8c8" stroke-width="0.8"/>
<circle cx="260.05" cy="378.02" r="4.9" fill="#0000b0" stroke="#9090d0" stroke-width="0.6"/>
<rect x="331.44" y="380.77" width="10" height="10" fill="#0085b0" stroke="#b8b8c8" stroke-width="0.8"/>
<rect x="334.88" y="374.49" width="10" height="10" fill="#c0001f" stroke="#b8b8c8" stroke-width="0.8"/>
<rect x="324.74" y="383.27" width="10" height="10" fill="#c0001f" stroke="#b8b8c8" stroke-width="0.8"/>
<circle cx="329.74" cy="378.02" r="4.9" fill="#0000b0" stroke="#9090d0" stroke-width="0.6"/>
<rect x="283.3" y="489.3" width="10" height="10" fill="#c0001f" stroke="#b8b8c8" stroke-width="0.8"/>
<rect x="450.3" y="489.3" width="10" height="10" fill="#c0001f" stroke="#b8b8c8" stroke-width="0.8"/>
<rect x="450.3" y="539.3" width="10" height="10" fill="#c0001f" stroke="#b8b8c8" stroke-width="0.8"/>
<rect x="433.7" y="539.3" width="10" height="10" fill="#c0001f" stroke="#b8b8c8" stroke-width="0.8"/>
<rect x="420.6" y="554.7" width="10" height="10" fill="#c0001f" stroke="#b8b8c8" stroke-width="0.8"/>
<rect x="312.6" y="554.7" width="10" height="10" fill="#c0001f" stroke="#b8b8c8" stroke-width="0.8"/>
<rect x="299.7" y="539.3" width="10" height="10" fill="#0000bb" stroke="#b8b8c8" stroke-width="0.8"/>
<rect x="283.3" y="539.3" width="10" height="10" fill="#c0001f" stroke="#b8b8c8" stroke-width="0.8"/>
<defs><radialGradient id="ring" cx="0.5" cy="0.5" r="0.5"><stop offset="0.70" stop-color="#7f93a3" stop-opacity="0"/><stop offset="0.75" stop-color="#6f8291" stop-opacity="0.4"/><stop offset="0.84" stop-color="#8fa2b0" stop-opacity="0.6"/><stop offset="0.93" stop-color="#6e808d" stop-opacity="0.7"/><stop offset="0.985" stop-color="#46525c" stop-opacity="0.7"/><stop offset="1" stop-color="#4d5a64" stop-opacity="0"/></radialGradient></defs>
<circle cx="892.9" cy="465.8" r="39.8" fill="url(#ring)"/>
<path d="M892.7 465.3V488.6L898.3 483.3L902.9 494.3L907.4 492.4L902.9 481.6H910.2Z" fill="#fff" stroke="#000" stroke-width="1.5" stroke-linejoin="round"/>
</svg>
<div id="vscroll" class="a"><div class="a" style="left:5px;top:143px;width:8px;height:283px;background:#808080;border-radius:4px"></div></div>
<div id="hscroll" class="a"><div class="a" style="left:206px;top:5px;width:604px;height:8px;background:#808080;border-radius:4px"></div><div class="a" style="left:1004px;top:0;width:55px;height:16px;background:#ececec;font-size:13px;line-height:17px;text-align:right;color:#111">1 &lt; 10</div></div>
<div id="cmdout" class="a"><span class="a" style="left:5px;top:2px;font-size:13.5px;line-height:16px;color:#1414d0"><i>Opdracht:</i> new</span></div>
<div id="cmdin" class="a"><span class="a" style="left:1px;top:8px;font-size:13.5px;line-height:16px;color:#111">Opdracht:</span><div class="a" style="left:65px;top:6px;width:990px;height:18px;background:#fff"></div><div class="a" style="left:1055px;top:1px;width:26px;height:26px;background:linear-gradient(#f4f4f4,#e8e8e8);border:1px solid #bdbdbd"><div class="a" style="left:5px;top:8px;width:15px;height:11px;border:1.3px solid #111;border-top-width:3px;background:#fff"></div></div></div>
<svg class="a" style="left:1154px;top:107px" width="301" height="691" viewBox="1154 107 301 691"><defs><linearGradient id="gLB" x1="0" y1="0" x2="0" y2="1"><stop offset="0" stop-color="#e9e9e9"/><stop offset="1" stop-color="#f6f6f6"/></linearGradient></defs><defs><linearGradient id="gTT" x1="0" y1="0" x2="0" y2="1"><stop offset="0" stop-color="#ededed"/><stop offset="0.5" stop-color="#e6e6e6"/><stop offset="1" stop-color="#d5d5d5"/></linearGradient></defs><rect x="1154" y="107" width="301" height="691" fill="#ececec"/><rect x="1154" y="108" width="301" height="21" fill="url(#gTT)"/><rect x="1154" y="128.6" width="301" height="1.6" fill="#c6c6c6"/><rect x="1154" y="107" width="1.6" height="691" fill="#c8c8c8"/><circle cx="1163.9" cy="118" r="6.6" fill="#6b6b6b"/><path d="M1161.2 115.3L1166.6 120.7M1166.6 115.3L1161.2 120.7" stroke="#fff" stroke-width="1.6"/><circle cx="1181.9" cy="118" r="6.6" fill="#6b6b6b"/><rect x="1178.4" y="117.4" width="5.4" height="3.8" fill="none" stroke="#fff" stroke-width="1.1"/><path d="M1180.4 117.2V114.6H1185.6V118.6H1184" fill="none" stroke="#fff" stroke-width="1.1"/><text x="1322.4" y="122.8" text-anchor="middle" font-family="Liberation Sans" font-size="12" fill="#222">Lagenlijst</text><rect x="1155.6" y="130" width="298.8" height="26" fill="url(#gLB)"/><path d="M1155.6 130.6H1454.4M1155.6 155.2H1454.4" stroke="#b4b4b4" stroke-width="1.3"/><path d="M1155.9 130V156" stroke="#b9b9b9" stroke-width="1.3"/><path d="M1214.9 130V156" stroke="#b9b9b9" stroke-width="1.3"/><path d="M1274.9 130V156" stroke="#b9b9b9" stroke-width="1.3"/><path d="M1334.9 130V156" stroke="#b9b9b9" stroke-width="1.3"/><path d="M1394.9 130V156" stroke="#b9b9b9" stroke-width="1.3"/><path d="M1454.2 130V156" stroke="#b9b9b9" stroke-width="1.3"/><g transform="translate(1184.9 143.2) scale(1.0)"><path d="M-7.4 0.3Q-3.5 -5.4 0.2 -5Q4.2 -5.2 7.4 0.3Q3.8 5 0 5Q-3.8 5 -7.4 0.3Z" fill="#111"/><path d="M-4.8 1Q-2.2 -2.6 0 -2.6Q2.4 -2.6 4.8 1Q2.4 3.2 0 3.2Q-2.4 3.2 -4.8 1Z" fill="#fff"/><circle cx="0" cy="0.4" r="2.3" fill="#111"/><circle cx="-0.6" cy="-0.3" r="0.6" fill="#fff" opacity="0.6"/></g><g transform="translate(1244.9 143.2) scale(1.0)"><path d="M-7.4 0.3Q-3.5 -5.4 0.2 -5Q4.2 -5.2 7.4 0.3Q3.8 5 0 5Q-3.8 5 -7.4 0.3Z" fill="#a8a8a8"/><path d="M-4.8 1Q-2.2 -2.6 0 -2.6Q2.4 -2.6 4.8 1Q2.4 3.2 0 3.2Q-2.4 3.2 -4.8 1Z" fill="#fff"/><circle cx="0" cy="0.4" r="2.3" fill="#a8a8a8"/><circle cx="-0.6" cy="-0.3" r="0.6" fill="#fff" opacity="0.6"/></g><path d="M1298.6 141.6H1303.4V136.8H1306.4V141.6H1311.2V144.6H1306.4V149.4H1303.4V144.6H1298.6Z" fill="#e00000"/><rect x="1358.6" y="141.2" width="12.6" height="3" fill="#e00000"/><path d="M1418.2 149L1431.8 136.4" stroke="#8a5a10" stroke-width="3.6" stroke-linecap="round"/><path d="M1418.8 148.4L1431.8 136.4" stroke="#f2b030" stroke-width="2.2" stroke-linecap="round"/><path d="M1430.2 138.0L1432.2 136.0" stroke="#e03020" stroke-width="3.2" stroke-linecap="round"/><circle cx="1418.2" cy="149" r="0.9" fill="#333"/><rect x="1156.2" y="156" width="297.4" height="642" fill="#fff"/><rect x="1161.6" y="163.1" width="15.2" height="8.6" fill="#000" stroke="#222" stroke-width="1"/><text x="1183.2" y="172.4" font-family="Liberation Sans" font-size="13.3" fill="#111">0</text><g transform="translate(1423 167.5) scale(1.0)"><path d="M-7.4 0.3Q-3.5 -5.4 0.2 -5Q4.2 -5.2 7.4 0.3Q3.8 5 0 5Q-3.8 5 -7.4 0.3Z" fill="#111"/><path d="M-4.8 1Q-2.2 -2.6 0 -2.6Q2.4 -2.6 4.8 1Q2.4 3.2 0 3.2Q-2.4 3.2 -4.8 1Z" fill="#fff"/><circle cx="0" cy="0.4" r="2.3" fill="#111"/><circle cx="-0.6" cy="-0.3" r="0.6" fill="#fff" opacity="0.6"/></g><path d="M1441.8 166.5V164.1A3.4 3.4 0 0 1 1448.6 164.1V166.5" fill="none" stroke="#c4c4c4" stroke-width="1.4"/><rect x="1440.4" y="166.3" width="9.6" height="7" rx="0.8" fill="#c4c4c4"/><rect x="1161.6" y="183.1" width="15.2" height="8.6" fill="#ff0000" stroke="#222" stroke-width="1"/><text x="1183.2" y="192.4" font-family="Liberation Sans" font-size="13.3" fill="#111">Midden</text><g transform="translate(1423 187.5) scale(1.0)"><path d="M-7.4 0.3Q-3.5 -5.4 0.2 -5Q4.2 -5.2 7.4 0.3Q3.8 5 0 5Q-3.8 5 -7.4 0.3Z" fill="#111"/><path d="M-4.8 1Q-2.2 -2.6 0 -2.6Q2.4 -2.6 4.8 1Q2.4 3.2 0 3.2Q-2.4 3.2 -4.8 1Z" fill="#fff"/><circle cx="0" cy="0.4" r="2.3" fill="#111"/><circle cx="-0.6" cy="-0.3" r="0.6" fill="#fff" opacity="0.6"/></g><path d="M1441.8 186.5V184.1A3.4 3.4 0 0 1 1448.6 184.1V186.5" fill="none" stroke="#c4c4c4" stroke-width="1.4"/><rect x="1440.4" y="186.3" width="9.6" height="7" rx="0.8" fill="#c4c4c4"/><rect x="1161.6" y="203.1" width="15.2" height="8.6" fill="#a0a0a8" stroke="#222" stroke-width="1"/><text x="1183.2" y="212.4" font-family="Liberation Sans" font-size="13.3" fill="#111">Terug</text><g transform="translate(1423 207.5) scale(1.0)"><path d="M-7.4 0.3Q-3.5 -5.4 0.2 -5Q4.2 -5.2 7.4 0.3Q3.8 5 0 5Q-3.8 5 -7.4 0.3Z" fill="#111"/><path d="M-4.8 1Q-2.2 -2.6 0 -2.6Q2.4 -2.6 4.8 1Q2.4 3.2 0 3.2Q-2.4 3.2 -4.8 1Z" fill="#fff"/><circle cx="0" cy="0.4" r="2.3" fill="#111"/><circle cx="-0.6" cy="-0.3" r="0.6" fill="#fff" opacity="0.6"/></g><path d="M1441.8 206.5V204.1A3.4 3.4 0 0 1 1448.6 204.1V206.5" fill="none" stroke="#c4c4c4" stroke-width="1.4"/><rect x="1440.4" y="206.3" width="9.6" height="7" rx="0.8" fill="#c4c4c4"/><rect x="1161.6" y="223.1" width="15.2" height="8.6" fill="#000" stroke="#222" stroke-width="1"/><text x="1183.2" y="232.4" font-family="Liberation Sans" font-size="13.3" fill="#111">Ventilatie</text><g transform="translate(1423 227.5) scale(1.0)"><path d="M-7.4 0.3Q-3.5 -5.4 0.2 -5Q4.2 -5.2 7.4 0.3Q3.8 5 0 5Q-3.8 5 -7.4 0.3Z" fill="#111"/><path d="M-4.8 1Q-2.2 -2.6 0 -2.6Q2.4 -2.6 4.8 1Q2.4 3.2 0 3.2Q-2.4 3.2 -4.8 1Z" fill="#fff"/><circle cx="0" cy="0.4" r="2.3" fill="#111"/><circle cx="-0.6" cy="-0.3" r="0.6" fill="#fff" opacity="0.6"/></g><path d="M1441.8 226.5V224.1A3.4 3.4 0 0 1 1448.6 224.1V226.5" fill="none" stroke="#c4c4c4" stroke-width="1.4"/><rect x="1440.4" y="226.3" width="9.6" height="7" rx="0.8" fill="#c4c4c4"/><path d="M1395.2 213.4L1407 201.4" stroke="#8a5a10" stroke-width="3.6" stroke-linecap="round"/><path d="M1395.8 212.8L1407 201.4" stroke="#f2b030" stroke-width="2.2" stroke-linecap="round"/><path d="M1405.4 203.0L1407.4 201.0" stroke="#e03020" stroke-width="3.2" stroke-linecap="round"/><circle cx="1395.2" cy="213.4" r="0.9" fill="#333"/></svg>

<div id="rightdock" class="a"></div>
<svg class="a" style="left:1455px;top:107px" width="45" height="400" viewBox="1455 107 45 400"><rect x="1462.1" y="115.89999999999999" width="1.8" height="1.8" fill="#9a9a9a"/><rect x="1468.1" y="115.89999999999999" width="1.8" height="1.8" fill="#9a9a9a"/><rect x="1474.1" y="115.89999999999999" width="1.8" height="1.8" fill="#9a9a9a"/><rect x="1480.1" y="115.89999999999999" width="1.8" height="1.8" fill="#9a9a9a"/><rect x="1486.1" y="115.89999999999999" width="1.8" height="1.8" fill="#9a9a9a"/><rect x="1462.1" y="260.40000000000003" width="1.8" height="1.8" fill="#9a9a9a"/><rect x="1468.1" y="260.40000000000003" width="1.8" height="1.8" fill="#9a9a9a"/><rect x="1474.1" y="260.40000000000003" width="1.8" height="1.8" fill="#9a9a9a"/><rect x="1480.1" y="260.40000000000003" width="1.8" height="1.8" fill="#9a9a9a"/><rect x="1486.1" y="260.40000000000003" width="1.8" height="1.8" fill="#9a9a9a"/><rect x="1462.1" y="408.1" width="1.8" height="1.8" fill="#9a9a9a"/><rect x="1468.1" y="408.1" width="1.8" height="1.8" fill="#9a9a9a"/><rect x="1474.1" y="408.1" width="1.8" height="1.8" fill="#9a9a9a"/><rect x="1480.1" y="408.1" width="1.8" height="1.8" fill="#9a9a9a"/><rect x="1486.1" y="408.1" width="1.8" height="1.8" fill="#9a9a9a"/><rect x="1456.4" y="120.2" width="43" height="41.7" rx="5" fill="#b9b9b9"/><rect x="1456.2" y="417" width="42" height="42.6" rx="5" fill="#b9b9b9"/><rect x="1463.5" y="127.9" width="27" height="27" fill="#fff" stroke="#222" stroke-width="1"/><rect x="1463.5" y="127.9" width="27" height="4.6" fill="#000"/><rect x="1464.6" y="128.8" width="2.8" height="2.8" fill="#fff"/><rect x="1463.5" y="174.7" width="27" height="27" fill="#fff" stroke="#222" stroke-width="1"/><rect x="1463.5" y="174.7" width="27" height="4.6" fill="#000"/><rect x="1464.6" y="175.6" width="2.8" height="2.8" fill="#fff"/><rect x="1463.5" y="220.2" width="27" height="27" fill="#fff" stroke="#222" stroke-width="1"/><rect x="1463.5" y="220.2" width="27" height="4.6" fill="#000"/><rect x="1464.6" y="221.1" width="2.8" height="2.8" fill="#fff"/><rect x="1463.5" y="276.1" width="27" height="27" fill="#fff" stroke="#222" stroke-width="1"/><rect x="1463.5" y="276.1" width="27" height="4.6" fill="#000"/><rect x="1464.6" y="277.0" width="2.8" height="2.8" fill="#fff"/><rect x="1463.5" y="322.5" width="27" height="27" fill="#fff" stroke="#222" stroke-width="1"/><rect x="1463.5" y="322.5" width="27" height="4.6" fill="#000"/><rect x="1464.6" y="323.4" width="2.8" height="2.8" fill="#fff"/><rect x="1463.5" y="368.3" width="27" height="27" fill="#fff" stroke="#222" stroke-width="1"/><rect x="1463.5" y="368.3" width="27" height="4.6" fill="#000"/><rect x="1464.6" y="369.2" width="2.8" height="2.8" fill="#fff"/><rect x="1463.5" y="424.9" width="27" height="27" fill="#fff" stroke="#222" stroke-width="1"/><rect x="1463.5" y="424.9" width="27" height="4.6" fill="#000"/><rect x="1464.6" y="425.79999999999995" width="2.8" height="2.8" fill="#fff"/><rect x="1463.5" y="471.3" width="27" height="27" fill="#fff" stroke="#222" stroke-width="1"/><rect x="1463.5" y="471.3" width="27" height="4.6" fill="#000"/><rect x="1464.6" y="472.2" width="2.8" height="2.8" fill="#fff"/><path d="M1470.5 138.4L1477 135.4V148.4L1470.5 151.4Z" fill="#bcbcbc" stroke="#444" stroke-width="0.8"/><path d="M1472.5 137.9L1479 134.9V147.9L1472.5 150.9Z" fill="#d8d8d8" stroke="#444" stroke-width="0.8"/><path d="M1475 137.4L1483.5 134.4V146.9L1475 149.9Z" fill="#fff" stroke="#444" stroke-width="0.8"/><path d="M1477 147.4L1481.5 138.4M1477 147.4H1482" stroke="#e02020" stroke-width="0.9"/><rect x="1470" y="184.2" width="10.5" height="8" fill="#f6ecc0" stroke="#555" stroke-width="0.8"/><circle cx="1479.6" cy="191.39999999999998" r="4.6" fill="#f6ecc0" fill-opacity="0.85" stroke="#555" stroke-width="0.8"/><rect x="1468.5" y="229.7" width="17.5" height="12" rx="2.5" fill="#f4f4f4" stroke="#b8c8e8" stroke-width="0.9"/><rect x="1466.4" y="284.1" width="3.6" height="3" fill="#000"/><rect x="1472" y="283.8" width="15" height="3.6" fill="#fff" stroke="#333" stroke-width="0.7"/><rect x="1466.4" y="289.70000000000005" width="3.6" height="3" fill="#000"/><rect x="1472" y="289.40000000000003" width="15" height="3.6" fill="#fff" stroke="#333" stroke-width="0.7"/><rect x="1466.4" y="295.3" width="3.6" height="3" fill="#000"/><rect x="1472" y="295.0" width="15" height="3.6" fill="#fff" stroke="#333" stroke-width="0.7"/><path d="M1470.5 332H1483.5L1479 338V345L1475.6 342.5V338Z" fill="#c8c8c8" stroke="#444" stroke-width="0.8"/><ellipse cx="1477" cy="332.4" rx="6.5" ry="1.6" fill="#888"/><path d="M1469.6 376.8L1475.5 380.40000000000003V388.2L1469.6 391.8Z" fill="#fff" stroke="#333" stroke-width="0.8"/><rect x="1475.5" y="380.40000000000003" width="8.4" height="7.8" rx="1" fill="#aaa" stroke="#555" stroke-width="0.7"/><path d="M1467 384.3H1488" stroke="#e87070" stroke-width="0.7" stroke-dasharray="1.5 1"/><path d="M1466 432.9H1477M1466 435.9H1478M1466 438.9H1477.5M1466 441.9H1478.5" stroke="#777" stroke-width="0.8"/><path d="M1463.8 445.9H1490.2" stroke="#222" stroke-width="0.8"/><path d="M1466 448.9H1467.5M1471 448.9H1484" stroke="#444" stroke-width="0.9"/><rect x="1470.4" y="479.40000000000003" width="13.2" height="15" rx="1" fill="#c98520" stroke="#8a5a10" stroke-width="0.6"/><rect x="1472" y="480.8" width="10" height="12.2" fill="#f6f6f6"/><rect x="1474.2" y="477.8" width="5.6" height="3" fill="#999"/><path d="M1473.4 484.2H1480.6M1473.4 486.2H1480.6M1473.4 488.2H1479" stroke="#bbb" stroke-width="0.7"/></svg>

<div id="status" class="a">
<span class="t" style="left:2px;top:9px;letter-spacing:0.27px">72.8537,15.9512</span>
<span class="t" style="left:2px;top:29px;letter-spacing:0.2px">@72.8537,15.9512</span>
<div class="a" style="left:253px;top:4px;width:1px;height:40px;background:#9a9a9a"></div>
<span class="t" style="left:256px;top:9px">74.5795&lt;12.35°</span>
<span class="t" style="left:256px;top:29px">@74.5795&lt;12.35°</span>
<div class="a" style="left:506px;top:21px;width:6px;height:6px;border-radius:3px;background:#c8c8c8"></div>
<span class="t" style="left:400px;width:299px;text-align:right;top:13px">Object of gebied selecteren</span>
<span class="t" style="left:400px;width:299px;text-align:right;top:24px">Object of referentiepunt verplaatsen</span>
<svg class="a" style="left:712px;top:4px" width="28" height="40" viewBox="712 802 28 40"><path d="M717.4 814.8C717.4 809.5 721 806 726 806C731 806 734.6 809.5 734.6 814.8V827C734.6 832 731 835.8 726 835.8C721 835.8 717.4 832 717.4 827Z" fill="#fff" stroke="#5a5a5a" stroke-width="1"/><path d="M717.4 820C723 818.6 729 818.6 734.6 820" fill="none" stroke="#444" stroke-width="1.3"/><rect x="724.3" y="808.4" width="3.4" height="7.2" rx="1.4" fill="#fff" stroke="#444" stroke-width="1"/><path d="M726 806.2V808.4M726 815.6V819" stroke="#444" stroke-width="1"/></svg>

<div class="a" style="left:940px;top:21px;width:6px;height:6px;border-radius:3px;background:#c8c8c8"></div>
<span class="t" style="left:949px;top:13px">Geselecteerde objecten:</span>
<span class="t" style="left:949px;top:24px">32 objecten op laag "0".</span>
<div class="a" style="left:1269px;top:21px;width:6px;height:6px;border-radius:3px;background:#c8c8c8"></div>
</div>
</body></html>
